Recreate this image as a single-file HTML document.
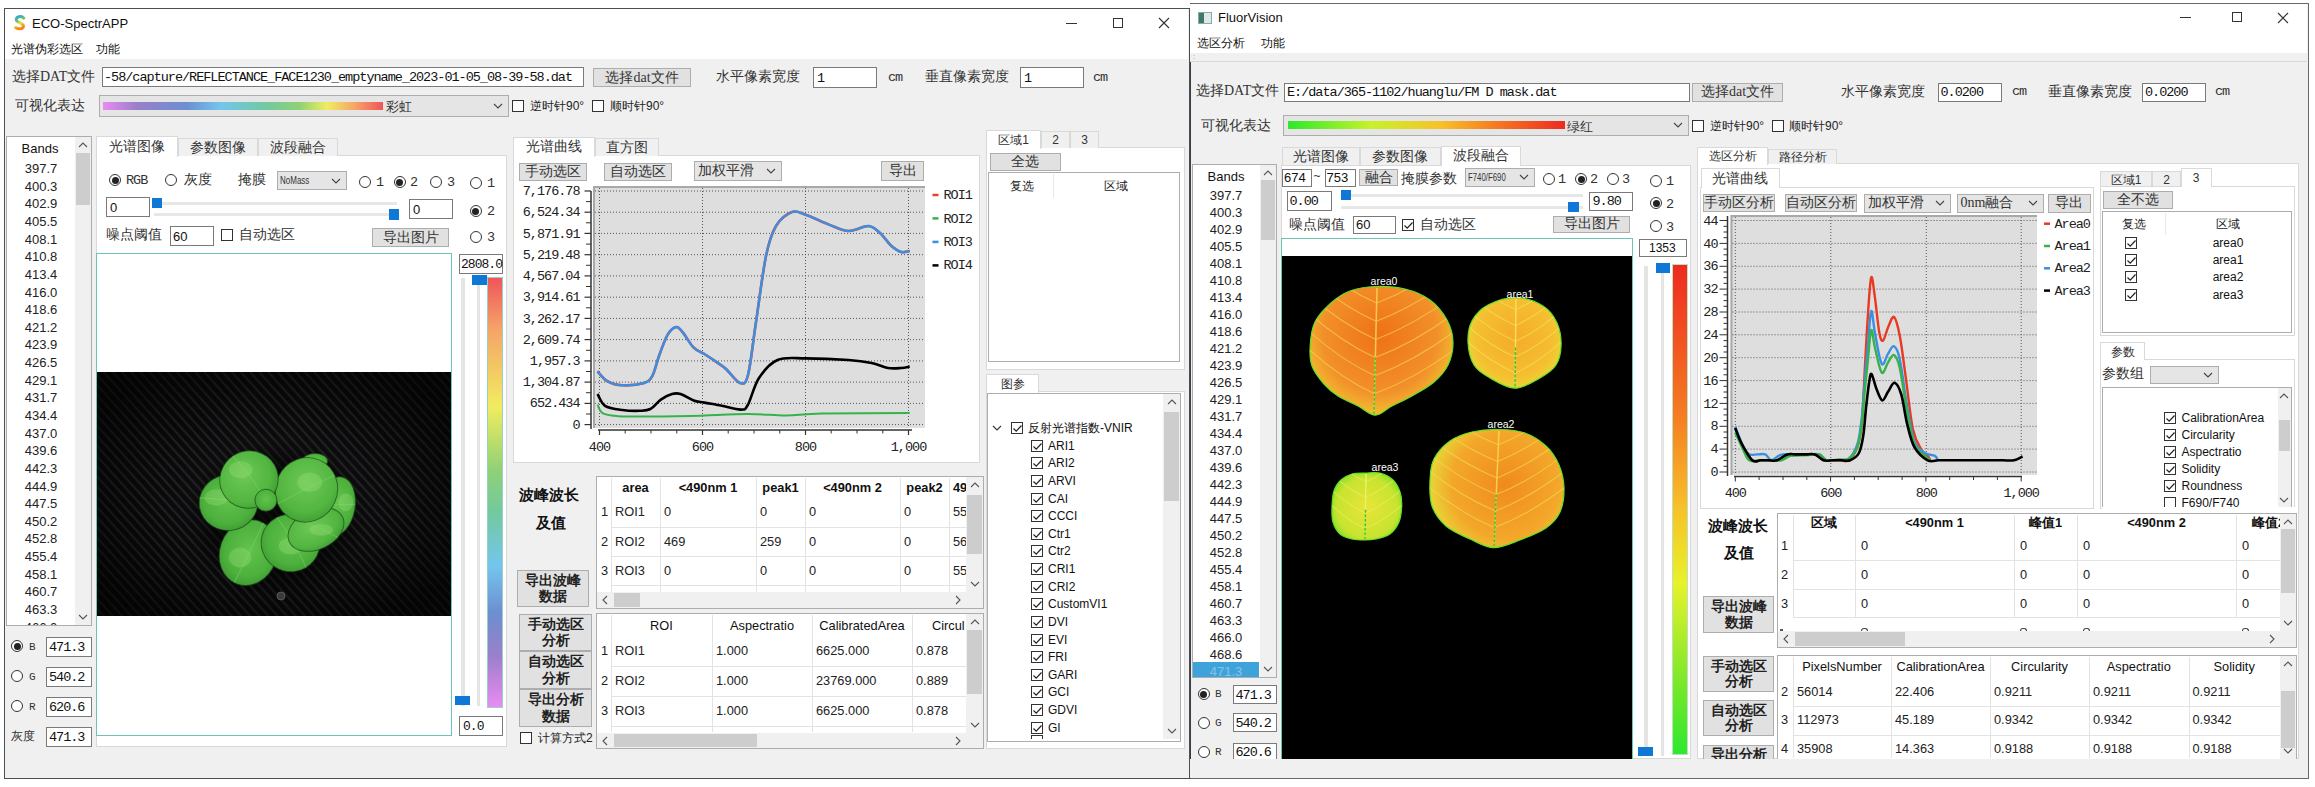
<!DOCTYPE html><html><head><meta charset="utf-8"><style>
html,body{margin:0;padding:0;}body{width:2315px;height:787px;position:relative;overflow:hidden;background:#fff;font-family:"Liberation Sans",sans-serif;}
body div,body svg{position:absolute;}.t{white-space:nowrap;}
</style></head><body>
<div style="left:4px;top:8px;width:1186px;height:771px;background:#f0f0f0;border:1px solid #4a4f55;box-sizing:border-box;"></div>
<div style="left:5px;top:9px;width:1183px;height:50px;background:#fff;"></div>
<svg style="left:13px;top:15px;" width="14" height="16"><defs><linearGradient id="sg" x1="0" y1="0" x2="0.3" y2="1"><stop offset="0" stop-color="#2aa3dc"/><stop offset="0.4" stop-color="#6cc46a"/><stop offset="0.62" stop-color="#e8e432"/><stop offset="1" stop-color="#f2881e"/></linearGradient></defs><path d="M10.8 3.2 C9.5 1.6 6.8 1.3 4.8 2.2 C2.6 3.3 2.8 6 5.2 7.1 C7.8 8.2 10.6 8.8 10.4 11.3 C10.1 14.2 5.6 14.6 2.6 12.6" stroke="url(#sg)" stroke-width="3" fill="none" stroke-linecap="round"/></svg>
<div class="t" style="left:32px;top:14.5px;font-size:13px;line-height:17px;font-family:'Liberation Sans', sans-serif;color:#111;">ECO-SpectrAPP</div>
<div style="left:1066px;top:23px;width:11px;height:1px;background:#333;"></div>
<div style="left:1113px;top:18px;width:10px;height:10px;border:1px solid #333;box-sizing:border-box;"></div>
<svg style="left:1158px;top:17px;" width="12" height="12"><path d="M1 1 L11 11 M11 1 L1 11" stroke="#333" stroke-width="1.1"/></svg>
<div class="t" style="left:11px;top:41.0px;font-size:12px;line-height:16px;font-family:'Liberation Sans', sans-serif;color:#111;">光谱伪彩选区</div>
<div class="t" style="left:96px;top:41.0px;font-size:12px;line-height:16px;font-family:'Liberation Sans', sans-serif;color:#111;">功能</div>
<div class="t" style="left:12px;top:68.0px;font-size:14px;line-height:18px;font-family:'Liberation Serif', serif;color:#333;">选择DAT文件</div>
<div style="left:102px;top:67px;width:482px;height:20px;background:#fff;border:1px solid #7a7a7a;box-sizing:border-box;"></div>
<div class="t" style="left:104px;top:69.0px;font-size:13.5px;line-height:17.5px;font-family:'Liberation Mono', monospace;letter-spacing:-1.01px;color:#111;">-58/capture/REFLECTANCE_FACE1230_emptyname_2023-01-05_08-39-58.dat</div>
<div style="left:593px;top:68px;width:98px;height:19px;background:#e1e1e1;border:1px solid #adadad;box-sizing:border-box;"></div>
<div class="t" style="left:583.0px;top:68.5px;width:118px;text-align:center;font-size:14px;line-height:18px;font-family:'Liberation Serif', serif;color:#333;">选择dat文件</div>
<div class="t" style="left:716px;top:68.0px;font-size:14px;line-height:18px;font-family:'Liberation Serif', serif;color:#333;">水平像素宽度</div>
<div style="left:813px;top:67px;width:64px;height:21px;background:#fff;border:1px solid #7a7a7a;box-sizing:border-box;"></div>
<div class="t" style="left:817px;top:69.5px;font-size:13.5px;line-height:17.5px;font-family:'Liberation Mono', monospace;letter-spacing:-1.01px;color:#111;">1</div>
<div class="t" style="left:888px;top:69.0px;font-size:13.5px;line-height:17.5px;font-family:'Liberation Mono', monospace;letter-spacing:-1.01px;color:#333;">cm</div>
<div class="t" style="left:925px;top:68.0px;font-size:14px;line-height:18px;font-family:'Liberation Serif', serif;color:#333;">垂直像素宽度</div>
<div style="left:1020px;top:67px;width:64px;height:21px;background:#fff;border:1px solid #7a7a7a;box-sizing:border-box;"></div>
<div class="t" style="left:1024px;top:69.5px;font-size:13.5px;line-height:17.5px;font-family:'Liberation Mono', monospace;letter-spacing:-1.01px;color:#111;">1</div>
<div class="t" style="left:1093px;top:69.0px;font-size:13.5px;line-height:17.5px;font-family:'Liberation Mono', monospace;letter-spacing:-1.01px;color:#333;">cm</div>
<div class="t" style="left:15px;top:97.0px;font-size:14px;line-height:18px;font-family:'Liberation Serif', serif;color:#333;">可视化表达</div>
<div style="left:99px;top:95px;width:410px;height:22px;background:#e5e5e5;border:1px solid #adadad;box-sizing:border-box;"></div>
<svg style="left:492px;top:100.0px;" width="12" height="12"><path transform="translate(6,6)" d="M-4 -2.0 L0 2.0 L4 -2.0" stroke="#444" stroke-width="1.1" fill="none"/></svg>
<div style="left:103px;top:101.5px;width:280px;height:8px;background:linear-gradient(90deg,#e98bf2 0%,#9a80c8 12%,#6c8fd0 30%,#74c6ec 42%,#72c9a0 58%,#8ed176 70%,#f1ec60 80%,#f5a468 90%,#f0555a 100%);"></div>
<div class="t" style="left:386px;top:97.5px;font-size:13px;line-height:17px;font-family:'Liberation Sans', sans-serif;color:#333;">彩虹</div>
<div style="left:512px;top:100px;width:12px;height:12px;border:1px solid #333;box-sizing:border-box;background:#fff;"></div>
<div class="t" style="left:530px;top:98.0px;font-size:12px;line-height:16px;font-family:'Liberation Sans', sans-serif;color:#222;">逆时针90°</div>
<div style="left:592px;top:100px;width:12px;height:12px;border:1px solid #333;box-sizing:border-box;background:#fff;"></div>
<div class="t" style="left:610px;top:98.0px;font-size:12px;line-height:16px;font-family:'Liberation Sans', sans-serif;color:#222;">顺时针90°</div>
<div style="left:6px;top:136px;width:86px;height:490px;background:#fff;border:1px solid #adadad;box-sizing:border-box;"></div>
<div style="left:75px;top:137px;width:16px;height:488px;background:#f0f0f0;"></div>
<div style="left:76px;top:153px;width:14px;height:52px;background:#cdcdcd;"></div>
<svg style="left:77.0px;top:139px;" width="12" height="12"><path transform="translate(6,6)" d="M-4 2.0 L0 -2.0 L4 2.0" stroke="#555" stroke-width="1.1" fill="none"/></svg>
<svg style="left:77.0px;top:611px;" width="12" height="12"><path transform="translate(6,6)" d="M-4 -2.0 L0 2.0 L4 -2.0" stroke="#555" stroke-width="1.1" fill="none"/></svg>
<div class="t" style="left:10.0px;top:139.5px;width:60px;text-align:center;font-size:13px;line-height:17px;font-family:'Liberation Sans', sans-serif;color:#111;">Bands</div>
<div style="left:7px;top:137px;width:68px;height:488px;overflow:hidden;">
<div class="t" style="left:0;top:23.0px;width:68px;text-align:center;font-size:13px;line-height:17px;color:#222;font-family:'Liberation Sans', sans-serif;">397.7</div>
<div class="t" style="left:0;top:40.6px;width:68px;text-align:center;font-size:13px;line-height:17px;color:#222;font-family:'Liberation Sans', sans-serif;">400.3</div>
<div class="t" style="left:0;top:58.3px;width:68px;text-align:center;font-size:13px;line-height:17px;color:#222;font-family:'Liberation Sans', sans-serif;">402.9</div>
<div class="t" style="left:0;top:75.9px;width:68px;text-align:center;font-size:13px;line-height:17px;color:#222;font-family:'Liberation Sans', sans-serif;">405.5</div>
<div class="t" style="left:0;top:93.6px;width:68px;text-align:center;font-size:13px;line-height:17px;color:#222;font-family:'Liberation Sans', sans-serif;">408.1</div>
<div class="t" style="left:0;top:111.2px;width:68px;text-align:center;font-size:13px;line-height:17px;color:#222;font-family:'Liberation Sans', sans-serif;">410.8</div>
<div class="t" style="left:0;top:128.8px;width:68px;text-align:center;font-size:13px;line-height:17px;color:#222;font-family:'Liberation Sans', sans-serif;">413.4</div>
<div class="t" style="left:0;top:146.5px;width:68px;text-align:center;font-size:13px;line-height:17px;color:#222;font-family:'Liberation Sans', sans-serif;">416.0</div>
<div class="t" style="left:0;top:164.1px;width:68px;text-align:center;font-size:13px;line-height:17px;color:#222;font-family:'Liberation Sans', sans-serif;">418.6</div>
<div class="t" style="left:0;top:181.8px;width:68px;text-align:center;font-size:13px;line-height:17px;color:#222;font-family:'Liberation Sans', sans-serif;">421.2</div>
<div class="t" style="left:0;top:199.4px;width:68px;text-align:center;font-size:13px;line-height:17px;color:#222;font-family:'Liberation Sans', sans-serif;">423.9</div>
<div class="t" style="left:0;top:217.0px;width:68px;text-align:center;font-size:13px;line-height:17px;color:#222;font-family:'Liberation Sans', sans-serif;">426.5</div>
<div class="t" style="left:0;top:234.7px;width:68px;text-align:center;font-size:13px;line-height:17px;color:#222;font-family:'Liberation Sans', sans-serif;">429.1</div>
<div class="t" style="left:0;top:252.3px;width:68px;text-align:center;font-size:13px;line-height:17px;color:#222;font-family:'Liberation Sans', sans-serif;">431.7</div>
<div class="t" style="left:0;top:270.0px;width:68px;text-align:center;font-size:13px;line-height:17px;color:#222;font-family:'Liberation Sans', sans-serif;">434.4</div>
<div class="t" style="left:0;top:287.6px;width:68px;text-align:center;font-size:13px;line-height:17px;color:#222;font-family:'Liberation Sans', sans-serif;">437.0</div>
<div class="t" style="left:0;top:305.2px;width:68px;text-align:center;font-size:13px;line-height:17px;color:#222;font-family:'Liberation Sans', sans-serif;">439.6</div>
<div class="t" style="left:0;top:322.9px;width:68px;text-align:center;font-size:13px;line-height:17px;color:#222;font-family:'Liberation Sans', sans-serif;">442.3</div>
<div class="t" style="left:0;top:340.5px;width:68px;text-align:center;font-size:13px;line-height:17px;color:#222;font-family:'Liberation Sans', sans-serif;">444.9</div>
<div class="t" style="left:0;top:358.2px;width:68px;text-align:center;font-size:13px;line-height:17px;color:#222;font-family:'Liberation Sans', sans-serif;">447.5</div>
<div class="t" style="left:0;top:375.8px;width:68px;text-align:center;font-size:13px;line-height:17px;color:#222;font-family:'Liberation Sans', sans-serif;">450.2</div>
<div class="t" style="left:0;top:393.4px;width:68px;text-align:center;font-size:13px;line-height:17px;color:#222;font-family:'Liberation Sans', sans-serif;">452.8</div>
<div class="t" style="left:0;top:411.1px;width:68px;text-align:center;font-size:13px;line-height:17px;color:#222;font-family:'Liberation Sans', sans-serif;">455.4</div>
<div class="t" style="left:0;top:428.7px;width:68px;text-align:center;font-size:13px;line-height:17px;color:#222;font-family:'Liberation Sans', sans-serif;">458.1</div>
<div class="t" style="left:0;top:446.4px;width:68px;text-align:center;font-size:13px;line-height:17px;color:#222;font-family:'Liberation Sans', sans-serif;">460.7</div>
<div class="t" style="left:0;top:464.0px;width:68px;text-align:center;font-size:13px;line-height:17px;color:#222;font-family:'Liberation Sans', sans-serif;">463.3</div>
<div class="t" style="left:0;top:481.6px;width:68px;text-align:center;font-size:13px;line-height:17px;color:#222;font-family:'Liberation Sans', sans-serif;">466.0</div>
</div>
<div style="left:11px;top:640px;width:12px;height:12px;border:1px solid #333;border-radius:50%;box-sizing:border-box;background:#fff;"></div>
<div style="left:13.5px;top:642.5px;width:7px;height:7px;background:#222;border-radius:50%;"></div>
<div class="t" style="left:29px;top:640.3px;font-size:11px;line-height:15px;font-family:'Liberation Mono', monospace;letter-spacing:-0.82px;color:#333;">B</div>
<div style="left:46px;top:637px;width:46px;height:20px;background:#fff;border:1px solid #7a7a7a;box-sizing:border-box;"></div>
<div class="t" style="left:49px;top:639.0px;font-size:13.5px;line-height:17.5px;font-family:'Liberation Mono', monospace;letter-spacing:-1.01px;color:#111;">471.3</div>
<div style="left:11px;top:670px;width:12px;height:12px;border:1px solid #333;border-radius:50%;box-sizing:border-box;background:#fff;"></div>
<div class="t" style="left:29px;top:670.3px;font-size:11px;line-height:15px;font-family:'Liberation Mono', monospace;letter-spacing:-0.82px;color:#333;">G</div>
<div style="left:46px;top:667px;width:46px;height:20px;background:#fff;border:1px solid #7a7a7a;box-sizing:border-box;"></div>
<div class="t" style="left:49px;top:669.0px;font-size:13.5px;line-height:17.5px;font-family:'Liberation Mono', monospace;letter-spacing:-1.01px;color:#111;">540.2</div>
<div style="left:11px;top:700px;width:12px;height:12px;border:1px solid #333;border-radius:50%;box-sizing:border-box;background:#fff;"></div>
<div class="t" style="left:29px;top:700.3px;font-size:11px;line-height:15px;font-family:'Liberation Mono', monospace;letter-spacing:-0.82px;color:#333;">R</div>
<div style="left:46px;top:697px;width:46px;height:20px;background:#fff;border:1px solid #7a7a7a;box-sizing:border-box;"></div>
<div class="t" style="left:49px;top:699.0px;font-size:13.5px;line-height:17.5px;font-family:'Liberation Mono', monospace;letter-spacing:-1.01px;color:#111;">620.6</div>
<div class="t" style="left:11px;top:728.0px;font-size:12px;line-height:16px;font-family:'Liberation Sans', sans-serif;color:#333;">灰度</div>
<div style="left:46px;top:727px;width:46px;height:20px;background:#fff;border:1px solid #7a7a7a;box-sizing:border-box;"></div>
<div class="t" style="left:49px;top:729.0px;font-size:13.5px;line-height:17.5px;font-family:'Liberation Mono', monospace;letter-spacing:-1.01px;color:#111;">471.3</div>
<div style="left:96px;top:155px;width:411px;height:592px;background:#fff;border:1px solid #d9d9d9;box-sizing:border-box;"></div>
<div style="left:96px;top:135.5px;width:81.5px;height:21.5px;background:#fff;border:1px solid #d9d9d9;border-bottom:none;box-sizing:border-box;z-index:2;"></div>
<div class="t" style="left:86.0px;top:137.8px;width:101.5px;text-align:center;font-size:14px;line-height:18px;font-family:'Liberation Serif', serif;color:#333;z-index:3;">光谱图像</div>
<div style="left:177.5px;top:137.5px;width:80px;height:18.5px;background:#f0f0f0;border:1px solid #d9d9d9;border-bottom:none;box-sizing:border-box;"></div>
<div class="t" style="left:167.5px;top:138.8px;width:100px;text-align:center;font-size:14px;line-height:18px;font-family:'Liberation Serif', serif;color:#333;z-index:3;">参数图像</div>
<div style="left:257.5px;top:137.5px;width:80px;height:18.5px;background:#f0f0f0;border:1px solid #d9d9d9;border-bottom:none;box-sizing:border-box;"></div>
<div class="t" style="left:247.5px;top:138.8px;width:100px;text-align:center;font-size:14px;line-height:18px;font-family:'Liberation Serif', serif;color:#333;z-index:3;">波段融合</div>
<div style="left:109px;top:174px;width:12px;height:12px;border:1px solid #333;border-radius:50%;box-sizing:border-box;background:#fff;"></div>
<div style="left:111.5px;top:176.5px;width:7px;height:7px;background:#222;border-radius:50%;"></div>
<div class="t" style="left:126px;top:172.1px;font-size:13.5px;line-height:17.5px;font-family:'Liberation Mono', monospace;letter-spacing:-1.01px;color:#333;">RGB</div>
<div style="left:165px;top:174px;width:12px;height:12px;border:1px solid #333;border-radius:50%;box-sizing:border-box;background:#fff;"></div>
<div class="t" style="left:184px;top:171.0px;font-size:14px;line-height:18px;font-family:'Liberation Serif', serif;color:#333;">灰度</div>
<div class="t" style="left:238px;top:171.0px;font-size:14px;line-height:18px;font-family:'Liberation Serif', serif;color:#333;">掩膜</div>
<div style="left:277px;top:171px;width:70px;height:19px;background:#e5e5e5;border:1px solid #adadad;box-sizing:border-box;"></div>
<svg style="left:330px;top:174.5px;" width="12" height="12"><path transform="translate(6,6)" d="M-4 -2.0 L0 2.0 L4 -2.0" stroke="#444" stroke-width="1.1" fill="none"/></svg>
<div class="t" style="left:280px;top:174.0px;font-size:10px;line-height:14px;font-family:'Liberation Sans', sans-serif;color:#333;transform:scaleX(0.8);transform-origin:left;">NoMass</div>
<div style="left:359px;top:176px;width:12px;height:12px;border:1px solid #333;border-radius:50%;box-sizing:border-box;background:#fff;"></div>
<div class="t" style="left:376px;top:174.1px;font-size:13.5px;line-height:17.5px;font-family:'Liberation Mono', monospace;letter-spacing:-1.01px;color:#333;">1</div>
<div style="left:393.5px;top:176px;width:12px;height:12px;border:1px solid #333;border-radius:50%;box-sizing:border-box;background:#fff;"></div>
<div style="left:396.0px;top:178.5px;width:7px;height:7px;background:#222;border-radius:50%;"></div>
<div class="t" style="left:410px;top:174.1px;font-size:13.5px;line-height:17.5px;font-family:'Liberation Mono', monospace;letter-spacing:-1.01px;color:#333;">2</div>
<div style="left:429.5px;top:176px;width:12px;height:12px;border:1px solid #333;border-radius:50%;box-sizing:border-box;background:#fff;"></div>
<div class="t" style="left:447px;top:174.1px;font-size:13.5px;line-height:17.5px;font-family:'Liberation Mono', monospace;letter-spacing:-1.01px;color:#333;">3</div>
<div style="left:469.5px;top:177px;width:12px;height:12px;border:1px solid #333;border-radius:50%;box-sizing:border-box;background:#fff;"></div>
<div class="t" style="left:487px;top:175.1px;font-size:13.5px;line-height:17.5px;font-family:'Liberation Mono', monospace;letter-spacing:-1.01px;color:#333;">1</div>
<div style="left:469.5px;top:205px;width:12px;height:12px;border:1px solid #333;border-radius:50%;box-sizing:border-box;background:#fff;"></div>
<div style="left:472.0px;top:207.5px;width:7px;height:7px;background:#222;border-radius:50%;"></div>
<div class="t" style="left:487px;top:203.1px;font-size:13.5px;line-height:17.5px;font-family:'Liberation Mono', monospace;letter-spacing:-1.01px;color:#333;">2</div>
<div style="left:469.5px;top:231px;width:12px;height:12px;border:1px solid #333;border-radius:50%;box-sizing:border-box;background:#fff;"></div>
<div class="t" style="left:487px;top:229.1px;font-size:13.5px;line-height:17.5px;font-family:'Liberation Mono', monospace;letter-spacing:-1.01px;color:#333;">3</div>
<div style="left:106px;top:197px;width:44px;height:20px;background:#fff;border:1px solid #7a7a7a;box-sizing:border-box;"></div>
<div class="t" style="left:110px;top:198.5px;font-size:13px;line-height:17px;font-family:'Liberation Sans', sans-serif;color:#111;">0</div>
<div style="left:154px;top:201.5px;width:243px;height:3px;background:#e7e7e7;"></div>
<div style="left:154px;top:213px;width:243px;height:3px;background:#e7e7e7;"></div>
<div style="left:152px;top:198px;width:10px;height:10px;background:#0f78d7;"></div>
<div style="left:389px;top:209px;width:10px;height:11px;background:#0f78d7;"></div>
<div style="left:409px;top:199px;width:44px;height:20px;background:#fff;border:1px solid #7a7a7a;box-sizing:border-box;"></div>
<div class="t" style="left:413px;top:200.5px;font-size:13px;line-height:17px;font-family:'Liberation Sans', sans-serif;color:#111;">0</div>
<div class="t" style="left:106px;top:226.0px;font-size:14px;line-height:18px;font-family:'Liberation Serif', serif;color:#333;">噪点阈值</div>
<div style="left:170px;top:226px;width:44px;height:20px;background:#fff;border:1px solid #7a7a7a;box-sizing:border-box;"></div>
<div class="t" style="left:173px;top:227.5px;font-size:13px;line-height:17px;font-family:'Liberation Sans', sans-serif;color:#111;">60</div>
<div style="left:221px;top:229px;width:12px;height:12px;border:1px solid #333;box-sizing:border-box;background:#fff;"></div>
<div class="t" style="left:239px;top:226.0px;font-size:14px;line-height:18px;font-family:'Liberation Serif', serif;color:#333;">自动选区</div>
<div style="left:372px;top:228px;width:77px;height:19px;background:#e1e1e1;border:1px solid #adadad;box-sizing:border-box;"></div>
<div class="t" style="left:362.0px;top:228.5px;width:97px;text-align:center;font-size:14px;line-height:18px;font-family:'Liberation Serif', serif;color:#333;">导出图片</div>
<div style="left:96px;top:253px;width:356px;height:483px;background:#fff;border:1px solid #6cc4b4;box-sizing:border-box;"></div>
<div style="left:97px;top:372px;width:354px;height:244px;background:repeating-linear-gradient(48deg,#0a0a0b 0px,#0a0a0b 3.2px,#262428 5px,#0a0a0b 6.8px);"></div>
<div style="left:97px;top:372px;width:354px;height:244px;background:radial-gradient(ellipse 60% 60% at 50% 50%, rgba(40,40,42,0.25) 0%, rgba(0,0,0,0) 50%, rgba(0,0,0,0.6) 100%);"></div>
<svg style="left:97px;top:372px;" width="354" height="244" viewBox="97 372 354 244"><defs><radialGradient id="lg" cx="0.5" cy="0.45" r="0.6"><stop offset="0" stop-color="#62c34c"/><stop offset="0.7" stop-color="#4cb03c"/><stop offset="1" stop-color="#3c9832"/></radialGradient><radialGradient id="lg2" cx="0.45" cy="0.4" r="0.65"><stop offset="0" stop-color="#6cc854"/><stop offset="0.7" stop-color="#52b640"/><stop offset="1" stop-color="#3e9c34"/></radialGradient><radialGradient id="sh" cx="0.5" cy="0.5" r="0.5"><stop offset="0.6" stop-color="#000" stop-opacity="0.6"/><stop offset="1" stop-color="#000" stop-opacity="0"/></radialGradient></defs><ellipse cx="277" cy="520" rx="90" ry="80" fill="url(#sh)"/><ellipse cx="315" cy="461" rx="12.7" ry="7.5" transform="rotate(0 315 461)" fill="url(#lg)" stroke="#1c4a1a" stroke-width="1" stroke-opacity="0.7"/><ellipse cx="336.5" cy="506.5" rx="18.5" ry="30" transform="rotate(10 336.5 506.5)" fill="url(#lg)" stroke="#1c4a1a" stroke-width="1" stroke-opacity="0.7"/><clipPath id="pl1"><ellipse cx="336.5" cy="506.5" rx="18.5" ry="30" transform="rotate(10 336.5 506.5)"/></clipPath><g clip-path="url(#pl1)"><path d="M396.4 505.1 Q347.1 502.4 270.0 508.0" stroke="#7ccf62" stroke-width="1.1" fill="none" opacity="0.55"/><ellipse cx="345.8" cy="502.2" rx="7.4" ry="9.0" fill="#a2e482" opacity="0.3"/></g><ellipse cx="248.4" cy="552.6" rx="28.6" ry="33.4" transform="rotate(20 248.4 552.6)" fill="url(#lg)" stroke="#1c4a1a" stroke-width="1" stroke-opacity="0.7"/><clipPath id="pl2"><ellipse cx="248.4" cy="552.6" rx="28.6" ry="33.4" transform="rotate(20 248.4 552.6)"/></clipPath><g clip-path="url(#pl2)"><path d="M229.0 592.7 Q250.2 553.1 270.0 508.0" stroke="#7ccf62" stroke-width="1.1" fill="none" opacity="0.55"/><ellipse cx="240.1" cy="557.5" rx="11.4" ry="10.0" fill="#a2e482" opacity="0.3"/></g><ellipse cx="228.6" cy="502.6" rx="29.4" ry="27.8" transform="rotate(-10 228.6 502.6)" fill="url(#lg)" stroke="#1c4a1a" stroke-width="1" stroke-opacity="0.7"/><clipPath id="pl3"><ellipse cx="228.6" cy="502.6" rx="29.4" ry="27.8" transform="rotate(-10 228.6 502.6)"/></clipPath><g clip-path="url(#pl3)"><path d="M191.3 497.7 Q228.5 498.1 270.0 508.0" stroke="#7ccf62" stroke-width="1.1" fill="none" opacity="0.55"/><ellipse cx="216.3" cy="497.5" rx="11.8" ry="8.3" fill="#a2e482" opacity="0.3"/></g><ellipse cx="290.5" cy="543" rx="29.4" ry="28.6" transform="rotate(15 290.5 543)" fill="url(#lg)" stroke="#1c4a1a" stroke-width="1" stroke-opacity="0.7"/><clipPath id="pl4"><ellipse cx="290.5" cy="543" rx="29.4" ry="28.6" transform="rotate(15 290.5 543)"/></clipPath><g clip-path="url(#pl4)"><path d="M308.9 574.5 Q296.6 542.5 270.0 508.0" stroke="#7ccf62" stroke-width="1.1" fill="none" opacity="0.55"/><ellipse cx="290.6" cy="546.0" rx="11.8" ry="8.6" fill="#a2e482" opacity="0.3"/></g><ellipse cx="316" cy="529.5" rx="29.4" ry="19.8" transform="rotate(-25 316 529.5)" fill="url(#lg2)" stroke="#1c4a1a" stroke-width="1" stroke-opacity="0.7"/><clipPath id="pl5"><ellipse cx="316" cy="529.5" rx="29.4" ry="19.8" transform="rotate(-25 316 529.5)"/></clipPath><g clip-path="url(#pl5)"><path d="M357.4 548.9 Q324.6 527.6 270.0 508.0" stroke="#7ccf62" stroke-width="1.1" fill="none" opacity="0.55"/><ellipse cx="321.2" cy="529.8" rx="11.8" ry="5.9" fill="#a2e482" opacity="0.3"/></g><ellipse cx="306.4" cy="489.8" rx="31" ry="32.5" transform="rotate(25 306.4 489.8)" fill="url(#lg2)" stroke="#1c4a1a" stroke-width="1" stroke-opacity="0.7"/><clipPath id="pl6"><ellipse cx="306.4" cy="489.8" rx="31" ry="32.5" transform="rotate(25 306.4 489.8)"/></clipPath><g clip-path="url(#pl6)"><path d="M339.2 473.4 Q314.0 484.0 270.0 508.0" stroke="#7ccf62" stroke-width="1.1" fill="none" opacity="0.55"/><ellipse cx="309.7" cy="482.2" rx="12.4" ry="9.8" fill="#a2e482" opacity="0.3"/></g><ellipse cx="249" cy="479.5" rx="29.4" ry="28.5" transform="rotate(-30 249 479.5)" fill="url(#lg2)" stroke="#1c4a1a" stroke-width="1" stroke-opacity="0.7"/><clipPath id="pl7"><ellipse cx="249" cy="479.5" rx="29.4" ry="28.5" transform="rotate(-30 249 479.5)"/></clipPath><g clip-path="url(#pl7)"><path d="M230.1 453.9 Q250.9 472.6 270.0 508.0" stroke="#7ccf62" stroke-width="1.1" fill="none" opacity="0.55"/><ellipse cx="240.8" cy="469.8" rx="11.8" ry="8.5" fill="#a2e482" opacity="0.3"/></g><ellipse cx="265.9" cy="500.2" rx="11" ry="11" transform="rotate(0 265.9 500.2)" fill="url(#lg)" stroke="#1c4a1a" stroke-width="1" stroke-opacity="0.7"/><circle cx="281" cy="596" r="4" fill="#3a3a3a" stroke="#777" stroke-width="0.6"/></svg>
<div style="left:459px;top:254px;width:44px;height:20px;background:#fff;border:1px solid #7a7a7a;box-sizing:border-box;"></div>
<div class="t" style="left:461px;top:256.3px;font-size:13px;line-height:17px;font-family:'Liberation Mono', monospace;letter-spacing:-0.97px;color:#111;">2808.0</div>
<div style="left:461px;top:278px;width:4px;height:428px;background:#e4e4e4;"></div>
<div style="left:477px;top:278px;width:3px;height:428px;background:#e4e4e4;"></div>
<div style="left:471.5px;top:275px;width:15px;height:10px;background:#0f78d7;"></div>
<div style="left:455px;top:696px;width:15px;height:9px;background:#0f78d7;"></div>
<div style="left:487px;top:277px;width:16px;height:431px;border:1px solid #9ad0c8;box-sizing:border-box;background:linear-gradient(180deg,#f0555a 0%,#f5a468 12%,#f1ec60 30%,#8ed176 45%,#72c9a0 55%,#74c6ec 67%,#6c8fd0 78%,#9a80c8 88%,#e98bf2 100%);"></div>
<div style="left:459px;top:716px;width:44px;height:20px;background:#fff;border:1px solid #7a7a7a;box-sizing:border-box;"></div>
<div class="t" style="left:463px;top:718.3px;font-size:13px;line-height:17px;font-family:'Liberation Mono', monospace;letter-spacing:-0.97px;color:#111;">0.0</div>
<div style="left:513px;top:155px;width:467px;height:308px;background:#fff;border:1px solid #d9d9d9;box-sizing:border-box;"></div>
<div style="left:513px;top:136.5px;width:82px;height:20.5px;background:#fff;border:1px solid #d9d9d9;border-bottom:none;box-sizing:border-box;z-index:2;"></div>
<div class="t" style="left:503.0px;top:138.2px;width:102px;text-align:center;font-size:14px;line-height:18px;font-family:'Liberation Serif', serif;color:#333;z-index:3;">光谱曲线</div>
<div style="left:595px;top:137.5px;width:64px;height:18.5px;background:#f0f0f0;border:1px solid #d9d9d9;border-bottom:none;box-sizing:border-box;"></div>
<div class="t" style="left:585.0px;top:138.8px;width:84px;text-align:center;font-size:14px;line-height:18px;font-family:'Liberation Serif', serif;color:#333;z-index:3;">直方图</div>
<div style="left:519px;top:163px;width:68px;height:18px;background:#e1e1e1;border:1px solid #adadad;box-sizing:border-box;"></div>
<div class="t" style="left:509.0px;top:163.0px;width:88px;text-align:center;font-size:14px;line-height:18px;font-family:'Liberation Serif', serif;color:#333;">手动选区</div>
<div style="left:604px;top:163px;width:68px;height:18px;background:#e1e1e1;border:1px solid #adadad;box-sizing:border-box;"></div>
<div class="t" style="left:594.0px;top:163.0px;width:88px;text-align:center;font-size:14px;line-height:18px;font-family:'Liberation Serif', serif;color:#333;">自动选区</div>
<div style="left:694px;top:161px;width:88px;height:20px;background:#e5e5e5;border:1px solid #adadad;box-sizing:border-box;"></div>
<div class="t" style="left:698px;top:162.0px;font-size:14px;line-height:18px;font-family:'Liberation Serif', serif;color:#333;">加权平滑</div>
<svg style="left:765px;top:165.0px;" width="12" height="12"><path transform="translate(6,6)" d="M-4 -2.0 L0 2.0 L4 -2.0" stroke="#444" stroke-width="1.1" fill="none"/></svg>
<div style="left:881px;top:161px;width:43px;height:20px;background:#e1e1e1;border:1px solid #adadad;box-sizing:border-box;"></div>
<div class="t" style="left:871.0px;top:162.0px;width:63px;text-align:center;font-size:14px;line-height:18px;font-family:'Liberation Serif', serif;color:#333;">导出</div>
<svg style="left:513px;top:156px;" width="467" height="306" viewBox="513 156 467 306"><rect x="593" y="186" width="332" height="242" fill="#dedede"/><path d="M594 428 L594 187 L925 187" stroke="#a8a8a8" stroke-width="2" fill="none"/><line x1="595" y1="424.6" x2="925" y2="424.6" stroke="#555" stroke-width="1" stroke-dasharray="1 2"/><line x1="595" y1="403.4" x2="925" y2="403.4" stroke="#555" stroke-width="1" stroke-dasharray="1 2"/><line x1="595" y1="382.1" x2="925" y2="382.1" stroke="#555" stroke-width="1" stroke-dasharray="1 2"/><line x1="595" y1="360.9" x2="925" y2="360.9" stroke="#555" stroke-width="1" stroke-dasharray="1 2"/><line x1="595" y1="339.6" x2="925" y2="339.6" stroke="#555" stroke-width="1" stroke-dasharray="1 2"/><line x1="595" y1="318.4" x2="925" y2="318.4" stroke="#555" stroke-width="1" stroke-dasharray="1 2"/><line x1="595" y1="297.2" x2="925" y2="297.2" stroke="#555" stroke-width="1" stroke-dasharray="1 2"/><line x1="595" y1="275.9" x2="925" y2="275.9" stroke="#555" stroke-width="1" stroke-dasharray="1 2"/><line x1="595" y1="254.7" x2="925" y2="254.7" stroke="#555" stroke-width="1" stroke-dasharray="1 2"/><line x1="595" y1="233.4" x2="925" y2="233.4" stroke="#555" stroke-width="1" stroke-dasharray="1 2"/><line x1="595" y1="212.2" x2="925" y2="212.2" stroke="#555" stroke-width="1" stroke-dasharray="1 2"/><line x1="595" y1="191.0" x2="925" y2="191.0" stroke="#555" stroke-width="1" stroke-dasharray="1 2"/><line x1="599.5" y1="188" x2="599.5" y2="428" stroke="#555" stroke-width="1" stroke-dasharray="1 2"/><line x1="702.5" y1="188" x2="702.5" y2="428" stroke="#555" stroke-width="1" stroke-dasharray="1 2"/><line x1="805.5" y1="188" x2="805.5" y2="428" stroke="#555" stroke-width="1" stroke-dasharray="1 2"/><line x1="908.5" y1="188" x2="908.5" y2="428" stroke="#555" stroke-width="1" stroke-dasharray="1 2"/><line x1="591" y1="191" x2="591" y2="429" stroke="#333" stroke-width="1.5"/><line x1="584.5" y1="424.6" x2="591" y2="424.6" stroke="#333" stroke-width="1.2"/><line x1="586" y1="414.0" x2="591" y2="414.0" stroke="#333" stroke-width="1"/><line x1="584.5" y1="403.4" x2="591" y2="403.4" stroke="#333" stroke-width="1.2"/><line x1="586" y1="392.7" x2="591" y2="392.7" stroke="#333" stroke-width="1"/><line x1="584.5" y1="382.1" x2="591" y2="382.1" stroke="#333" stroke-width="1.2"/><line x1="586" y1="371.5" x2="591" y2="371.5" stroke="#333" stroke-width="1"/><line x1="584.5" y1="360.9" x2="591" y2="360.9" stroke="#333" stroke-width="1.2"/><line x1="586" y1="350.3" x2="591" y2="350.3" stroke="#333" stroke-width="1"/><line x1="584.5" y1="339.6" x2="591" y2="339.6" stroke="#333" stroke-width="1.2"/><line x1="586" y1="329.0" x2="591" y2="329.0" stroke="#333" stroke-width="1"/><line x1="584.5" y1="318.4" x2="591" y2="318.4" stroke="#333" stroke-width="1.2"/><line x1="586" y1="307.8" x2="591" y2="307.8" stroke="#333" stroke-width="1"/><line x1="584.5" y1="297.2" x2="591" y2="297.2" stroke="#333" stroke-width="1.2"/><line x1="586" y1="286.5" x2="591" y2="286.5" stroke="#333" stroke-width="1"/><line x1="584.5" y1="275.9" x2="591" y2="275.9" stroke="#333" stroke-width="1.2"/><line x1="586" y1="265.3" x2="591" y2="265.3" stroke="#333" stroke-width="1"/><line x1="584.5" y1="254.7" x2="591" y2="254.7" stroke="#333" stroke-width="1.2"/><line x1="586" y1="244.1" x2="591" y2="244.1" stroke="#333" stroke-width="1"/><line x1="584.5" y1="233.4" x2="591" y2="233.4" stroke="#333" stroke-width="1.2"/><line x1="586" y1="222.8" x2="591" y2="222.8" stroke="#333" stroke-width="1"/><line x1="584.5" y1="212.2" x2="591" y2="212.2" stroke="#333" stroke-width="1.2"/><line x1="586" y1="201.6" x2="591" y2="201.6" stroke="#333" stroke-width="1"/><line x1="584.5" y1="191.0" x2="591" y2="191.0" stroke="#333" stroke-width="1.2"/><line x1="598" y1="430" x2="912" y2="430" stroke="#333" stroke-width="1.5"/><line x1="599.5" y1="430" x2="599.5" y2="435" stroke="#333" stroke-width="1.2"/><line x1="625.2" y1="430" x2="625.2" y2="433.5" stroke="#333" stroke-width="1"/><line x1="651.0" y1="430" x2="651.0" y2="433.5" stroke="#333" stroke-width="1"/><line x1="676.8" y1="430" x2="676.8" y2="433.5" stroke="#333" stroke-width="1"/><line x1="702.5" y1="430" x2="702.5" y2="435" stroke="#333" stroke-width="1.2"/><line x1="728.2" y1="430" x2="728.2" y2="433.5" stroke="#333" stroke-width="1"/><line x1="754.0" y1="430" x2="754.0" y2="433.5" stroke="#333" stroke-width="1"/><line x1="779.8" y1="430" x2="779.8" y2="433.5" stroke="#333" stroke-width="1"/><line x1="805.5" y1="430" x2="805.5" y2="435" stroke="#333" stroke-width="1.2"/><line x1="831.2" y1="430" x2="831.2" y2="433.5" stroke="#333" stroke-width="1"/><line x1="857.0" y1="430" x2="857.0" y2="433.5" stroke="#333" stroke-width="1"/><line x1="882.8" y1="430" x2="882.8" y2="433.5" stroke="#333" stroke-width="1"/><line x1="908.5" y1="430" x2="908.5" y2="435" stroke="#333" stroke-width="1.2"/><path d="M597.5 404.8 C598.4 406.2 599.6 411.5 603.0 413.4 C606.4 415.3 612.7 415.7 618.0 416.2 C623.3 416.7 623.0 416.6 635.0 416.6 C647.0 416.6 671.2 416.4 690.0 416.0 C708.8 415.6 731.6 414.1 747.6 414.0 C763.6 413.9 773.6 415.6 786.0 415.5 C798.4 415.4 801.4 414.0 822.0 413.6 C842.6 413.2 895.1 413.1 909.7 413.0" stroke="#35b34a" stroke-width="2" fill="none" stroke-linejoin="round"/><path d="M597.5 394.0 C598.8 396.0 600.9 403.1 605.0 405.8 C609.1 408.5 616.5 409.2 622.3 410.0 C628.1 410.8 634.9 411.0 639.6 410.8 C644.3 410.6 646.8 410.9 650.4 409.0 C654.0 407.1 657.6 401.9 661.2 399.4 C664.8 396.9 668.8 394.9 672.0 394.0 C675.2 393.1 677.0 392.9 680.6 394.0 C684.2 395.1 689.6 399.0 693.6 400.4 C697.6 401.8 699.7 401.7 704.4 402.6 C709.1 403.5 715.6 404.6 721.7 405.8 C727.8 407.0 736.6 409.8 741.0 409.6 C745.4 409.4 745.0 409.9 748.0 404.6 C751.0 399.3 754.1 385.4 759.0 378.0 C763.9 370.6 769.7 363.3 777.5 360.0 C785.3 356.7 793.8 358.4 805.6 358.4 C817.5 358.4 837.6 359.2 848.6 360.0 C859.6 360.8 865.1 361.7 871.7 363.0 C878.3 364.3 883.0 367.2 888.0 368.0 C893.0 368.8 897.8 368.2 901.4 368.0 C905.0 367.8 908.3 366.8 909.7 366.6" stroke="#000" stroke-width="2.6" fill="none" stroke-linejoin="round"/><path d="M597.5 371.3 C599.1 372.9 602.9 378.7 607.0 381.0 C611.1 383.3 616.1 385.0 622.3 385.3 C628.5 385.6 639.0 384.6 644.0 383.0 C649.0 381.4 650.0 380.1 652.5 375.6 C655.0 371.1 656.5 362.8 659.0 356.0 C661.5 349.2 664.8 339.4 667.7 334.6 C670.6 329.8 673.8 327.4 676.3 327.0 C678.8 326.6 679.9 329.0 682.8 332.4 C685.7 335.8 690.0 343.9 693.6 347.5 C697.2 351.1 700.5 351.5 704.4 354.0 C708.3 356.5 713.7 360.1 717.3 362.6 C720.9 365.1 722.2 365.6 726.0 369.0 C729.8 372.4 736.3 382.0 740.0 383.0 C743.7 384.0 745.3 385.2 748.0 375.0 C750.7 364.8 753.0 341.8 756.0 322.0 C759.0 302.2 762.7 272.0 766.0 256.0 C769.3 240.0 771.7 233.3 776.0 226.0 C780.3 218.7 787.1 213.9 792.0 212.0 C796.9 210.1 799.4 212.6 805.6 214.7 C811.8 216.8 821.8 221.9 829.0 224.6 C836.2 227.3 842.0 230.8 848.6 231.0 C855.2 231.2 863.2 225.7 868.4 226.0 C873.6 226.3 876.1 229.7 880.0 233.0 C883.9 236.3 887.9 242.8 891.5 246.0 C895.1 249.2 898.4 251.2 901.4 252.0 C904.4 252.8 908.3 251.2 909.7 251.0" stroke="#e8402a" stroke-width="2.6" fill="none" stroke-linejoin="round"/><path d="M597.5 371.3 C599.1 372.9 602.9 378.7 607.0 381.0 C611.1 383.3 616.1 385.0 622.3 385.3 C628.5 385.6 639.0 384.6 644.0 383.0 C649.0 381.4 650.0 380.1 652.5 375.6 C655.0 371.1 656.5 362.8 659.0 356.0 C661.5 349.2 664.8 339.4 667.7 334.6 C670.6 329.8 673.8 327.4 676.3 327.0 C678.8 326.6 679.9 329.0 682.8 332.4 C685.7 335.8 690.0 343.9 693.6 347.5 C697.2 351.1 700.5 351.5 704.4 354.0 C708.3 356.5 713.7 360.1 717.3 362.6 C720.9 365.1 722.2 365.6 726.0 369.0 C729.8 372.4 736.3 382.0 740.0 383.0 C743.7 384.0 745.3 385.2 748.0 375.0 C750.7 364.8 753.0 341.8 756.0 322.0 C759.0 302.2 762.7 272.0 766.0 256.0 C769.3 240.0 771.7 233.3 776.0 226.0 C780.3 218.7 787.1 213.9 792.0 212.0 C796.9 210.1 799.4 212.6 805.6 214.7 C811.8 216.8 821.8 221.9 829.0 224.6 C836.2 227.3 842.0 230.8 848.6 231.0 C855.2 231.2 863.2 225.7 868.4 226.0 C873.6 226.3 876.1 229.7 880.0 233.0 C883.9 236.3 887.9 242.8 891.5 246.0 C895.1 249.2 898.4 251.2 901.4 252.0 C904.4 252.8 908.3 251.2 909.7 251.0" stroke="#3c8fe0" stroke-width="2.4" fill="none" stroke-linejoin="round"/><line x1="932.5" y1="195.0" x2="938.5" y2="195.0" stroke="#e8402a" stroke-width="2.5"/><line x1="932.5" y1="218.4" x2="938.5" y2="218.4" stroke="#35b34a" stroke-width="2.5"/><line x1="932.5" y1="241.9" x2="938.5" y2="241.9" stroke="#3c8fe0" stroke-width="2.5"/><line x1="932.5" y1="265.4" x2="938.5" y2="265.4" stroke="#000" stroke-width="2.5"/></svg>
<div class="t" style="left:943.5px;top:187.1px;font-size:13.5px;line-height:17.5px;font-family:'Liberation Mono', monospace;letter-spacing:-1.01px;color:#222;">ROI1</div>
<div class="t" style="left:943.5px;top:210.5px;font-size:13.5px;line-height:17.5px;font-family:'Liberation Mono', monospace;letter-spacing:-1.01px;color:#222;">ROI2</div>
<div class="t" style="left:943.5px;top:234.0px;font-size:13.5px;line-height:17.5px;font-family:'Liberation Mono', monospace;letter-spacing:-1.01px;color:#222;">ROI3</div>
<div class="t" style="left:943.5px;top:257.4px;font-size:13.5px;line-height:17.5px;font-family:'Liberation Mono', monospace;letter-spacing:-1.01px;color:#222;">ROI4</div>
<div class="t" style="left:479.5px;top:416.7px;width:100px;text-align:right;font-size:13.5px;line-height:17.5px;font-family:'Liberation Mono', monospace;letter-spacing:-1.01px;color:#222;">0</div>
<div class="t" style="left:479.5px;top:395.4px;width:100px;text-align:right;font-size:13.5px;line-height:17.5px;font-family:'Liberation Mono', monospace;letter-spacing:-1.01px;color:#222;">652.434</div>
<div class="t" style="left:479.5px;top:374.2px;width:100px;text-align:right;font-size:13.5px;line-height:17.5px;font-family:'Liberation Mono', monospace;letter-spacing:-1.01px;color:#222;">1,304.87</div>
<div class="t" style="left:479.5px;top:352.9px;width:100px;text-align:right;font-size:13.5px;line-height:17.5px;font-family:'Liberation Mono', monospace;letter-spacing:-1.01px;color:#222;">1,957.3</div>
<div class="t" style="left:479.5px;top:331.7px;width:100px;text-align:right;font-size:13.5px;line-height:17.5px;font-family:'Liberation Mono', monospace;letter-spacing:-1.01px;color:#222;">2,609.74</div>
<div class="t" style="left:479.5px;top:310.5px;width:100px;text-align:right;font-size:13.5px;line-height:17.5px;font-family:'Liberation Mono', monospace;letter-spacing:-1.01px;color:#222;">3,262.17</div>
<div class="t" style="left:479.5px;top:289.2px;width:100px;text-align:right;font-size:13.5px;line-height:17.5px;font-family:'Liberation Mono', monospace;letter-spacing:-1.01px;color:#222;">3,914.61</div>
<div class="t" style="left:479.5px;top:268.0px;width:100px;text-align:right;font-size:13.5px;line-height:17.5px;font-family:'Liberation Mono', monospace;letter-spacing:-1.01px;color:#222;">4,567.04</div>
<div class="t" style="left:479.5px;top:246.7px;width:100px;text-align:right;font-size:13.5px;line-height:17.5px;font-family:'Liberation Mono', monospace;letter-spacing:-1.01px;color:#222;">5,219.48</div>
<div class="t" style="left:479.5px;top:225.5px;width:100px;text-align:right;font-size:13.5px;line-height:17.5px;font-family:'Liberation Mono', monospace;letter-spacing:-1.01px;color:#222;">5,871.91</div>
<div class="t" style="left:479.5px;top:204.3px;width:100px;text-align:right;font-size:13.5px;line-height:17.5px;font-family:'Liberation Mono', monospace;letter-spacing:-1.01px;color:#222;">6,524.34</div>
<div class="t" style="left:479.5px;top:183.0px;width:100px;text-align:right;font-size:13.5px;line-height:17.5px;font-family:'Liberation Mono', monospace;letter-spacing:-1.01px;color:#222;">7,176.78</div>
<div class="t" style="left:569.5px;top:439.1px;width:60px;text-align:center;font-size:13.5px;line-height:17.5px;font-family:'Liberation Mono', monospace;letter-spacing:-1.01px;color:#222;">400</div>
<div class="t" style="left:672.5px;top:439.1px;width:60px;text-align:center;font-size:13.5px;line-height:17.5px;font-family:'Liberation Mono', monospace;letter-spacing:-1.01px;color:#222;">600</div>
<div class="t" style="left:775.5px;top:439.1px;width:60px;text-align:center;font-size:13.5px;line-height:17.5px;font-family:'Liberation Mono', monospace;letter-spacing:-1.01px;color:#222;">800</div>
<div class="t" style="left:878.5px;top:439.1px;width:60px;text-align:center;font-size:13.5px;line-height:17.5px;font-family:'Liberation Mono', monospace;letter-spacing:-1.01px;color:#222;">1,000</div>
<div class="t" style="left:519px;top:485.5px;font-size:15px;line-height:19px;font-family:'Liberation Serif', serif;color:#111;font-weight:bold;">波峰波长</div>
<div class="t" style="left:521.0px;top:513.5px;width:60px;text-align:center;font-size:15px;line-height:19px;font-family:'Liberation Serif', serif;color:#111;font-weight:bold;">及值</div>
<div style="left:517px;top:570px;width:72px;height:37px;background:#e1e1e1;border:1px solid #adadad;box-sizing:border-box;"></div>
<div class="t" style="left:507.0px;top:572.0px;width:92px;text-align:center;font-size:14px;line-height:18px;font-family:'Liberation Serif', serif;color:#222;font-weight:bold;">导出波峰</div>
<div class="t" style="left:507.0px;top:588.0px;width:92px;text-align:center;font-size:14px;line-height:18px;font-family:'Liberation Serif', serif;color:#222;font-weight:bold;">数据</div>
<div style="left:519px;top:614px;width:73px;height:37px;background:#e1e1e1;border:1px solid #adadad;box-sizing:border-box;"></div>
<div class="t" style="left:509.0px;top:616.0px;width:93px;text-align:center;font-size:14px;line-height:18px;font-family:'Liberation Serif', serif;color:#222;font-weight:bold;">手动选区</div>
<div class="t" style="left:509.0px;top:632.0px;width:93px;text-align:center;font-size:14px;line-height:18px;font-family:'Liberation Serif', serif;color:#222;font-weight:bold;">分析</div>
<div style="left:519px;top:651px;width:73px;height:38px;background:#e1e1e1;border:1px solid #adadad;box-sizing:border-box;"></div>
<div class="t" style="left:509.0px;top:653.3px;width:93px;text-align:center;font-size:14px;line-height:18px;font-family:'Liberation Serif', serif;color:#222;font-weight:bold;">自动选区</div>
<div class="t" style="left:509.0px;top:669.7px;width:93px;text-align:center;font-size:14px;line-height:18px;font-family:'Liberation Serif', serif;color:#222;font-weight:bold;">分析</div>
<div style="left:519px;top:689px;width:73px;height:38px;background:#e1e1e1;border:1px solid #adadad;box-sizing:border-box;"></div>
<div class="t" style="left:509.0px;top:691.3px;width:93px;text-align:center;font-size:14px;line-height:18px;font-family:'Liberation Serif', serif;color:#222;font-weight:bold;">导出分析</div>
<div class="t" style="left:509.0px;top:707.7px;width:93px;text-align:center;font-size:14px;line-height:18px;font-family:'Liberation Serif', serif;color:#222;font-weight:bold;">数据</div>
<div style="left:520px;top:732px;width:12px;height:12px;border:1px solid #333;box-sizing:border-box;background:#fff;"></div>
<div class="t" style="left:538px;top:730.0px;font-size:12px;line-height:16px;font-family:'Liberation Sans', sans-serif;color:#222;">计算方式2</div>
<div style="left:596px;top:476px;width:388px;height:133px;overflow:hidden;">
</div>
<div style="left:596px;top:476px;width:388px;height:133px;background:#fff;border:1px solid #adadad;box-sizing:border-box;"></div>
<div class="t" style="left:575.5px;top:479.6px;width:120px;text-align:center;font-size:12.8px;line-height:16.8px;font-family:'Liberation Sans', sans-serif;color:#111;font-weight:bold;">area</div>
<div class="t" style="left:648.0px;top:479.6px;width:120px;text-align:center;font-size:12.8px;line-height:16.8px;font-family:'Liberation Sans', sans-serif;color:#111;font-weight:bold;">&lt;490nm 1</div>
<div class="t" style="left:720.5px;top:479.6px;width:120px;text-align:center;font-size:12.8px;line-height:16.8px;font-family:'Liberation Sans', sans-serif;color:#111;font-weight:bold;">peak1</div>
<div class="t" style="left:792.5px;top:479.6px;width:120px;text-align:center;font-size:12.8px;line-height:16.8px;font-family:'Liberation Sans', sans-serif;color:#111;font-weight:bold;">&lt;490nm 2</div>
<div class="t" style="left:864.5px;top:479.6px;width:120px;text-align:center;font-size:12.8px;line-height:16.8px;font-family:'Liberation Sans', sans-serif;color:#111;font-weight:bold;">peak2</div>
<div class="t" style="left:953px;top:479.6px;font-size:12.8px;line-height:16.8px;font-family:'Liberation Sans', sans-serif;color:#111;font-weight:bold;">49</div>
<div style="left:611px;top:478px;width:1px;height:114px;background:#e3e3e3;"></div>
<div style="left:660px;top:478px;width:1px;height:114px;background:#e3e3e3;"></div>
<div style="left:756px;top:478px;width:1px;height:114px;background:#e3e3e3;"></div>
<div style="left:805px;top:478px;width:1px;height:114px;background:#e3e3e3;"></div>
<div style="left:900px;top:478px;width:1px;height:114px;background:#e3e3e3;"></div>
<div style="left:949px;top:478px;width:1px;height:114px;background:#e3e3e3;"></div>
<div class="t" style="left:601px;top:504.2px;font-size:12.8px;line-height:16.8px;font-family:'Liberation Sans', sans-serif;color:#222;">1</div>
<div class="t" style="left:615px;top:504.2px;font-size:12.8px;line-height:16.8px;font-family:'Liberation Sans', sans-serif;color:#222;">ROI1</div>
<div class="t" style="left:664px;top:504.2px;font-size:12.8px;line-height:16.8px;font-family:'Liberation Sans', sans-serif;color:#222;">0</div>
<div class="t" style="left:760px;top:504.2px;font-size:12.8px;line-height:16.8px;font-family:'Liberation Sans', sans-serif;color:#222;">0</div>
<div class="t" style="left:809px;top:504.2px;font-size:12.8px;line-height:16.8px;font-family:'Liberation Sans', sans-serif;color:#222;">0</div>
<div class="t" style="left:904px;top:504.2px;font-size:12.8px;line-height:16.8px;font-family:'Liberation Sans', sans-serif;color:#222;">0</div>
<div class="t" style="left:953px;top:504.2px;font-size:12.8px;line-height:16.8px;font-family:'Liberation Sans', sans-serif;color:#222;">55</div>
<div style="left:611px;top:526.6px;width:355px;height:1px;background:#e3e3e3;"></div>
<div class="t" style="left:601px;top:533.6px;font-size:12.8px;line-height:16.8px;font-family:'Liberation Sans', sans-serif;color:#222;">2</div>
<div class="t" style="left:615px;top:533.6px;font-size:12.8px;line-height:16.8px;font-family:'Liberation Sans', sans-serif;color:#222;">ROI2</div>
<div class="t" style="left:664px;top:533.6px;font-size:12.8px;line-height:16.8px;font-family:'Liberation Sans', sans-serif;color:#222;">469</div>
<div class="t" style="left:760px;top:533.6px;font-size:12.8px;line-height:16.8px;font-family:'Liberation Sans', sans-serif;color:#222;">259</div>
<div class="t" style="left:809px;top:533.6px;font-size:12.8px;line-height:16.8px;font-family:'Liberation Sans', sans-serif;color:#222;">0</div>
<div class="t" style="left:904px;top:533.6px;font-size:12.8px;line-height:16.8px;font-family:'Liberation Sans', sans-serif;color:#222;">0</div>
<div class="t" style="left:953px;top:533.6px;font-size:12.8px;line-height:16.8px;font-family:'Liberation Sans', sans-serif;color:#222;">56</div>
<div style="left:611px;top:556.0px;width:355px;height:1px;background:#e3e3e3;"></div>
<div class="t" style="left:601px;top:563.0px;font-size:12.8px;line-height:16.8px;font-family:'Liberation Sans', sans-serif;color:#222;">3</div>
<div class="t" style="left:615px;top:563.0px;font-size:12.8px;line-height:16.8px;font-family:'Liberation Sans', sans-serif;color:#222;">ROI3</div>
<div class="t" style="left:664px;top:563.0px;font-size:12.8px;line-height:16.8px;font-family:'Liberation Sans', sans-serif;color:#222;">0</div>
<div class="t" style="left:760px;top:563.0px;font-size:12.8px;line-height:16.8px;font-family:'Liberation Sans', sans-serif;color:#222;">0</div>
<div class="t" style="left:809px;top:563.0px;font-size:12.8px;line-height:16.8px;font-family:'Liberation Sans', sans-serif;color:#222;">0</div>
<div class="t" style="left:904px;top:563.0px;font-size:12.8px;line-height:16.8px;font-family:'Liberation Sans', sans-serif;color:#222;">0</div>
<div class="t" style="left:953px;top:563.0px;font-size:12.8px;line-height:16.8px;font-family:'Liberation Sans', sans-serif;color:#222;">55</div>
<div style="left:611px;top:585.4px;width:355px;height:1px;background:#e3e3e3;"></div>
<div style="left:966px;top:477px;width:17px;height:115px;background:#f0f0f0;"></div>
<div style="left:967px;top:495px;width:15px;height:59px;background:#cdcdcd;"></div>
<svg style="left:968.5px;top:479px;" width="12" height="12"><path transform="translate(6,6)" d="M-4 2.0 L0 -2.0 L4 2.0" stroke="#555" stroke-width="1.1" fill="none"/></svg>
<svg style="left:968.5px;top:578px;" width="12" height="12"><path transform="translate(6,6)" d="M-4 -2.0 L0 2.0 L4 -2.0" stroke="#555" stroke-width="1.1" fill="none"/></svg>
<div style="left:597px;top:592px;width:369px;height:16px;background:#f0f0f0;"></div>
<div style="left:614px;top:593px;width:26px;height:14px;background:#cdcdcd;"></div>
<svg style="left:599px;top:594.0px;" width="12" height="12"><path transform="translate(6,6)" d="M2.0 -4 L-2.0 0 L2.0 4" stroke="#555" stroke-width="1.1" fill="none"/></svg>
<svg style="left:952px;top:594.0px;" width="12" height="12"><path transform="translate(6,6)" d="M-2.0 -4 L2.0 0 L-2.0 4" stroke="#555" stroke-width="1.1" fill="none"/></svg>
<div style="left:966px;top:592px;width:17px;height:16px;background:#f0f0f0;"></div>
<div style="left:596px;top:613px;width:388px;height:136px;background:#fff;border:1px solid #adadad;box-sizing:border-box;"></div>
<div class="t" style="left:601.5px;top:617.6px;width:120px;text-align:center;font-size:12.8px;line-height:16.8px;font-family:'Liberation Sans', sans-serif;color:#111;">ROI</div>
<div class="t" style="left:702.0px;top:617.6px;width:120px;text-align:center;font-size:12.8px;line-height:16.8px;font-family:'Liberation Sans', sans-serif;color:#111;">Aspectratio</div>
<div class="t" style="left:802.0px;top:617.6px;width:120px;text-align:center;font-size:12.8px;line-height:16.8px;font-family:'Liberation Sans', sans-serif;color:#111;">CalibratedArea</div>
<div class="t" style="left:932px;top:617.6px;font-size:12.8px;line-height:16.8px;font-family:'Liberation Sans', sans-serif;color:#111;">Circul</div>
<div style="left:611px;top:615px;width:1px;height:117px;background:#e3e3e3;"></div>
<div style="left:712px;top:615px;width:1px;height:117px;background:#e3e3e3;"></div>
<div style="left:812px;top:615px;width:1px;height:117px;background:#e3e3e3;"></div>
<div style="left:912px;top:615px;width:1px;height:117px;background:#e3e3e3;"></div>
<div class="t" style="left:601px;top:643.3px;font-size:12.8px;line-height:16.8px;font-family:'Liberation Sans', sans-serif;color:#222;">1</div>
<div class="t" style="left:615px;top:643.3px;font-size:12.8px;line-height:16.8px;font-family:'Liberation Sans', sans-serif;color:#222;">ROI1</div>
<div class="t" style="left:716px;top:643.3px;font-size:12.8px;line-height:16.8px;font-family:'Liberation Sans', sans-serif;color:#222;">1.000</div>
<div class="t" style="left:816px;top:643.3px;font-size:12.8px;line-height:16.8px;font-family:'Liberation Sans', sans-serif;color:#222;">6625.000</div>
<div class="t" style="left:916px;top:643.3px;font-size:12.8px;line-height:16.8px;font-family:'Liberation Sans', sans-serif;color:#222;">0.878</div>
<div style="left:611px;top:666.2px;width:355px;height:1px;background:#e3e3e3;"></div>
<div class="t" style="left:601px;top:673.1px;font-size:12.8px;line-height:16.8px;font-family:'Liberation Sans', sans-serif;color:#222;">2</div>
<div class="t" style="left:615px;top:673.1px;font-size:12.8px;line-height:16.8px;font-family:'Liberation Sans', sans-serif;color:#222;">ROI2</div>
<div class="t" style="left:716px;top:673.1px;font-size:12.8px;line-height:16.8px;font-family:'Liberation Sans', sans-serif;color:#222;">1.000</div>
<div class="t" style="left:816px;top:673.1px;font-size:12.8px;line-height:16.8px;font-family:'Liberation Sans', sans-serif;color:#222;">23769.000</div>
<div class="t" style="left:916px;top:673.1px;font-size:12.8px;line-height:16.8px;font-family:'Liberation Sans', sans-serif;color:#222;">0.889</div>
<div style="left:611px;top:696.0px;width:355px;height:1px;background:#e3e3e3;"></div>
<div class="t" style="left:601px;top:702.9px;font-size:12.8px;line-height:16.8px;font-family:'Liberation Sans', sans-serif;color:#222;">3</div>
<div class="t" style="left:615px;top:702.9px;font-size:12.8px;line-height:16.8px;font-family:'Liberation Sans', sans-serif;color:#222;">ROI3</div>
<div class="t" style="left:716px;top:702.9px;font-size:12.8px;line-height:16.8px;font-family:'Liberation Sans', sans-serif;color:#222;">1.000</div>
<div class="t" style="left:816px;top:702.9px;font-size:12.8px;line-height:16.8px;font-family:'Liberation Sans', sans-serif;color:#222;">6625.000</div>
<div class="t" style="left:916px;top:702.9px;font-size:12.8px;line-height:16.8px;font-family:'Liberation Sans', sans-serif;color:#222;">0.878</div>
<div style="left:611px;top:725.8000000000001px;width:355px;height:1px;background:#e3e3e3;"></div>
<div style="left:966px;top:614px;width:17px;height:119px;background:#f0f0f0;"></div>
<div style="left:967px;top:630px;width:15px;height:64px;background:#cdcdcd;"></div>
<svg style="left:968.5px;top:616px;" width="12" height="12"><path transform="translate(6,6)" d="M-4 2.0 L0 -2.0 L4 2.0" stroke="#555" stroke-width="1.1" fill="none"/></svg>
<svg style="left:968.5px;top:719px;" width="12" height="12"><path transform="translate(6,6)" d="M-4 -2.0 L0 2.0 L4 -2.0" stroke="#555" stroke-width="1.1" fill="none"/></svg>
<div style="left:597px;top:733px;width:369px;height:15px;background:#f0f0f0;"></div>
<div style="left:614px;top:734px;width:143px;height:13px;background:#cdcdcd;"></div>
<svg style="left:599px;top:734.5px;" width="12" height="12"><path transform="translate(6,6)" d="M2.0 -4 L-2.0 0 L2.0 4" stroke="#555" stroke-width="1.1" fill="none"/></svg>
<svg style="left:952px;top:734.5px;" width="12" height="12"><path transform="translate(6,6)" d="M-2.0 -4 L2.0 0 L-2.0 4" stroke="#555" stroke-width="1.1" fill="none"/></svg>
<div style="left:966px;top:733px;width:17px;height:15px;background:#f0f0f0;"></div>
<div style="left:986px;top:147px;width:199px;height:223px;background:#fff;border:1px solid #d9d9d9;box-sizing:border-box;"></div>
<div style="left:986px;top:129.5px;width:55px;height:19px;background:#fff;border:1px solid #d9d9d9;border-bottom:none;box-sizing:border-box;z-index:2;"></div>
<div class="t" style="left:976.0px;top:131.5px;width:75px;text-align:center;font-size:12px;line-height:16px;font-family:'Liberation Sans', sans-serif;color:#333;z-index:3;">区域1</div>
<div style="left:1041px;top:131px;width:29px;height:16.5px;background:#f0f0f0;border:1px solid #d9d9d9;border-bottom:none;box-sizing:border-box;"></div>
<div class="t" style="left:1031.0px;top:132.2px;width:49px;text-align:center;font-size:12px;line-height:16px;font-family:'Liberation Sans', sans-serif;color:#333;z-index:3;">2</div>
<div style="left:1070px;top:131px;width:29px;height:16.5px;background:#f0f0f0;border:1px solid #d9d9d9;border-bottom:none;box-sizing:border-box;"></div>
<div class="t" style="left:1060.0px;top:132.2px;width:49px;text-align:center;font-size:12px;line-height:16px;font-family:'Liberation Sans', sans-serif;color:#333;z-index:3;">3</div>
<div style="left:989.5px;top:153px;width:71px;height:18px;background:#e1e1e1;border:1px solid #adadad;box-sizing:border-box;"></div>
<div class="t" style="left:979.5px;top:153.0px;width:91px;text-align:center;font-size:14px;line-height:18px;font-family:'Liberation Serif', serif;color:#333;">全选</div>
<div style="left:988px;top:172px;width:192px;height:190px;background:#fff;border:1px solid #adadad;box-sizing:border-box;"></div>
<div class="t" style="left:992.0px;top:178.0px;width:60px;text-align:center;font-size:12px;line-height:16px;font-family:'Liberation Sans', sans-serif;color:#222;">复选</div>
<div class="t" style="left:1086.0px;top:178.0px;width:60px;text-align:center;font-size:12px;line-height:16px;font-family:'Liberation Sans', sans-serif;color:#222;">区域</div>
<div style="left:1053px;top:174px;width:1px;height:24px;background:#e8e8e8;"></div>
<div style="left:986px;top:391px;width:199px;height:358px;background:#fff;border:1px solid #d9d9d9;box-sizing:border-box;"></div>
<div style="left:986px;top:374px;width:53px;height:18.5px;background:#fff;border:1px solid #d9d9d9;border-bottom:none;box-sizing:border-box;z-index:2;"></div>
<div class="t" style="left:976.0px;top:375.8px;width:73px;text-align:center;font-size:12px;line-height:16px;font-family:'Liberation Sans', sans-serif;color:#333;z-index:3;">图参</div>
<div style="left:987px;top:393px;width:194px;height:349px;background:#fff;border:1px solid #adadad;box-sizing:border-box;"></div>
<div style="left:1163px;top:394px;width:17px;height:345px;background:#f0f0f0;"></div>
<div style="left:1164px;top:412px;width:15px;height:89px;background:#cdcdcd;"></div>
<svg style="left:1165.5px;top:396px;" width="12" height="12"><path transform="translate(6,6)" d="M-4 2.0 L0 -2.0 L4 2.0" stroke="#555" stroke-width="1.1" fill="none"/></svg>
<svg style="left:1165.5px;top:725px;" width="12" height="12"><path transform="translate(6,6)" d="M-4 -2.0 L0 2.0 L4 -2.0" stroke="#555" stroke-width="1.1" fill="none"/></svg>
<svg style="left:991px;top:422px;" width="12" height="12"><path transform="translate(6,6)" d="M-4 -2.0 L0 2.0 L4 -2.0" stroke="#333" stroke-width="1.1" fill="none"/></svg>
<div style="left:1010.5px;top:421.5px;width:12px;height:12px;border:1px solid #333;box-sizing:border-box;background:#fff;"></div>
<svg style="left:1010.5px;top:421.5px;" width="12" height="12"><path d="M2.5 6.5 L5.2 9.2 L10.5 3.5" stroke="#222" stroke-width="1.2" fill="none"/></svg>
<div class="t" style="left:1028px;top:420.0px;font-size:12px;line-height:16px;font-family:'Liberation Sans', sans-serif;color:#111;">反射光谱指数-VNIR</div>
<div style="left:1030.5px;top:439.7px;width:12px;height:12px;border:1px solid #333;box-sizing:border-box;background:#fff;"></div>
<svg style="left:1030.5px;top:439.7px;" width="12" height="12"><path d="M2.5 6.5 L5.2 9.2 L10.5 3.5" stroke="#222" stroke-width="1.2" fill="none"/></svg>
<div class="t" style="left:1048px;top:437.7px;font-size:12px;line-height:16px;font-family:'Liberation Sans', sans-serif;color:#111;">ARI1</div>
<div style="left:1030.5px;top:457.32px;width:12px;height:12px;border:1px solid #333;box-sizing:border-box;background:#fff;"></div>
<svg style="left:1030.5px;top:457.32px;" width="12" height="12"><path d="M2.5 6.5 L5.2 9.2 L10.5 3.5" stroke="#222" stroke-width="1.2" fill="none"/></svg>
<div class="t" style="left:1048px;top:455.3px;font-size:12px;line-height:16px;font-family:'Liberation Sans', sans-serif;color:#111;">ARI2</div>
<div style="left:1030.5px;top:474.94px;width:12px;height:12px;border:1px solid #333;box-sizing:border-box;background:#fff;"></div>
<svg style="left:1030.5px;top:474.94px;" width="12" height="12"><path d="M2.5 6.5 L5.2 9.2 L10.5 3.5" stroke="#222" stroke-width="1.2" fill="none"/></svg>
<div class="t" style="left:1048px;top:472.9px;font-size:12px;line-height:16px;font-family:'Liberation Sans', sans-serif;color:#111;">ARVI</div>
<div style="left:1030.5px;top:492.56px;width:12px;height:12px;border:1px solid #333;box-sizing:border-box;background:#fff;"></div>
<svg style="left:1030.5px;top:492.56px;" width="12" height="12"><path d="M2.5 6.5 L5.2 9.2 L10.5 3.5" stroke="#222" stroke-width="1.2" fill="none"/></svg>
<div class="t" style="left:1048px;top:490.6px;font-size:12px;line-height:16px;font-family:'Liberation Sans', sans-serif;color:#111;">CAI</div>
<div style="left:1030.5px;top:510.17999999999995px;width:12px;height:12px;border:1px solid #333;box-sizing:border-box;background:#fff;"></div>
<svg style="left:1030.5px;top:510.17999999999995px;" width="12" height="12"><path d="M2.5 6.5 L5.2 9.2 L10.5 3.5" stroke="#222" stroke-width="1.2" fill="none"/></svg>
<div class="t" style="left:1048px;top:508.2px;font-size:12px;line-height:16px;font-family:'Liberation Sans', sans-serif;color:#111;">CCCI</div>
<div style="left:1030.5px;top:527.8px;width:12px;height:12px;border:1px solid #333;box-sizing:border-box;background:#fff;"></div>
<svg style="left:1030.5px;top:527.8px;" width="12" height="12"><path d="M2.5 6.5 L5.2 9.2 L10.5 3.5" stroke="#222" stroke-width="1.2" fill="none"/></svg>
<div class="t" style="left:1048px;top:525.8px;font-size:12px;line-height:16px;font-family:'Liberation Sans', sans-serif;color:#111;">Ctr1</div>
<div style="left:1030.5px;top:545.42px;width:12px;height:12px;border:1px solid #333;box-sizing:border-box;background:#fff;"></div>
<svg style="left:1030.5px;top:545.42px;" width="12" height="12"><path d="M2.5 6.5 L5.2 9.2 L10.5 3.5" stroke="#222" stroke-width="1.2" fill="none"/></svg>
<div class="t" style="left:1048px;top:543.4px;font-size:12px;line-height:16px;font-family:'Liberation Sans', sans-serif;color:#111;">Ctr2</div>
<div style="left:1030.5px;top:563.04px;width:12px;height:12px;border:1px solid #333;box-sizing:border-box;background:#fff;"></div>
<svg style="left:1030.5px;top:563.04px;" width="12" height="12"><path d="M2.5 6.5 L5.2 9.2 L10.5 3.5" stroke="#222" stroke-width="1.2" fill="none"/></svg>
<div class="t" style="left:1048px;top:561.0px;font-size:12px;line-height:16px;font-family:'Liberation Sans', sans-serif;color:#111;">CRI1</div>
<div style="left:1030.5px;top:580.66px;width:12px;height:12px;border:1px solid #333;box-sizing:border-box;background:#fff;"></div>
<svg style="left:1030.5px;top:580.66px;" width="12" height="12"><path d="M2.5 6.5 L5.2 9.2 L10.5 3.5" stroke="#222" stroke-width="1.2" fill="none"/></svg>
<div class="t" style="left:1048px;top:578.7px;font-size:12px;line-height:16px;font-family:'Liberation Sans', sans-serif;color:#111;">CRI2</div>
<div style="left:1030.5px;top:598.28px;width:12px;height:12px;border:1px solid #333;box-sizing:border-box;background:#fff;"></div>
<svg style="left:1030.5px;top:598.28px;" width="12" height="12"><path d="M2.5 6.5 L5.2 9.2 L10.5 3.5" stroke="#222" stroke-width="1.2" fill="none"/></svg>
<div class="t" style="left:1048px;top:596.3px;font-size:12px;line-height:16px;font-family:'Liberation Sans', sans-serif;color:#111;">CustomVI1</div>
<div style="left:1030.5px;top:615.9px;width:12px;height:12px;border:1px solid #333;box-sizing:border-box;background:#fff;"></div>
<svg style="left:1030.5px;top:615.9px;" width="12" height="12"><path d="M2.5 6.5 L5.2 9.2 L10.5 3.5" stroke="#222" stroke-width="1.2" fill="none"/></svg>
<div class="t" style="left:1048px;top:613.9px;font-size:12px;line-height:16px;font-family:'Liberation Sans', sans-serif;color:#111;">DVI</div>
<div style="left:1030.5px;top:633.52px;width:12px;height:12px;border:1px solid #333;box-sizing:border-box;background:#fff;"></div>
<svg style="left:1030.5px;top:633.52px;" width="12" height="12"><path d="M2.5 6.5 L5.2 9.2 L10.5 3.5" stroke="#222" stroke-width="1.2" fill="none"/></svg>
<div class="t" style="left:1048px;top:631.5px;font-size:12px;line-height:16px;font-family:'Liberation Sans', sans-serif;color:#111;">EVI</div>
<div style="left:1030.5px;top:651.14px;width:12px;height:12px;border:1px solid #333;box-sizing:border-box;background:#fff;"></div>
<svg style="left:1030.5px;top:651.14px;" width="12" height="12"><path d="M2.5 6.5 L5.2 9.2 L10.5 3.5" stroke="#222" stroke-width="1.2" fill="none"/></svg>
<div class="t" style="left:1048px;top:649.1px;font-size:12px;line-height:16px;font-family:'Liberation Sans', sans-serif;color:#111;">FRI</div>
<div style="left:1030.5px;top:668.76px;width:12px;height:12px;border:1px solid #333;box-sizing:border-box;background:#fff;"></div>
<svg style="left:1030.5px;top:668.76px;" width="12" height="12"><path d="M2.5 6.5 L5.2 9.2 L10.5 3.5" stroke="#222" stroke-width="1.2" fill="none"/></svg>
<div class="t" style="left:1048px;top:666.8px;font-size:12px;line-height:16px;font-family:'Liberation Sans', sans-serif;color:#111;">GARI</div>
<div style="left:1030.5px;top:686.38px;width:12px;height:12px;border:1px solid #333;box-sizing:border-box;background:#fff;"></div>
<svg style="left:1030.5px;top:686.38px;" width="12" height="12"><path d="M2.5 6.5 L5.2 9.2 L10.5 3.5" stroke="#222" stroke-width="1.2" fill="none"/></svg>
<div class="t" style="left:1048px;top:684.4px;font-size:12px;line-height:16px;font-family:'Liberation Sans', sans-serif;color:#111;">GCI</div>
<div style="left:1030.5px;top:704.0px;width:12px;height:12px;border:1px solid #333;box-sizing:border-box;background:#fff;"></div>
<svg style="left:1030.5px;top:704.0px;" width="12" height="12"><path d="M2.5 6.5 L5.2 9.2 L10.5 3.5" stroke="#222" stroke-width="1.2" fill="none"/></svg>
<div class="t" style="left:1048px;top:702.0px;font-size:12px;line-height:16px;font-family:'Liberation Sans', sans-serif;color:#111;">GDVI</div>
<div style="left:1030.5px;top:721.62px;width:12px;height:12px;border:1px solid #333;box-sizing:border-box;background:#fff;"></div>
<svg style="left:1030.5px;top:721.62px;" width="12" height="12"><path d="M2.5 6.5 L5.2 9.2 L10.5 3.5" stroke="#222" stroke-width="1.2" fill="none"/></svg>
<div class="t" style="left:1048px;top:719.6px;font-size:12px;line-height:16px;font-family:'Liberation Sans', sans-serif;color:#111;">GI</div>
<div style="left:1030.5px;top:735px;width:12px;height:4px;border:1px solid #333;border-bottom:none;box-sizing:border-box;background:#fff;"></div>
<div style="left:1189.5px;top:3px;width:1119px;height:776px;background:#f0f0f0;border:1px solid #666a6e;border-left:1.5px solid #3a3f44;box-sizing:border-box;"></div>
<div style="left:1190px;top:4px;width:1117px;height:49px;background:#fff;"></div>
<div style="left:1198px;top:12px;width:14px;height:12px;border:1px solid #8aa;box-sizing:border-box;background:linear-gradient(90deg,#3d7a6a 0 45%,#dfe7e7 45%);"></div>
<div class="t" style="left:1218px;top:9.0px;font-size:13px;line-height:17px;font-family:'Liberation Sans', sans-serif;color:#111;">FluorVision</div>
<div style="left:2180px;top:17px;width:11px;height:1px;background:#333;"></div>
<div style="left:2232px;top:12px;width:10px;height:10px;border:1px solid #333;box-sizing:border-box;"></div>
<svg style="left:2277px;top:12px;" width="12" height="12"><path d="M1 1 L11 11 M11 1 L1 11" stroke="#333" stroke-width="1.1"/></svg>
<div class="t" style="left:1197px;top:34.5px;font-size:12px;line-height:16px;font-family:'Liberation Sans', sans-serif;color:#111;">选区分析</div>
<div class="t" style="left:1261px;top:34.5px;font-size:12px;line-height:16px;font-family:'Liberation Sans', sans-serif;color:#111;">功能</div>
<div style="left:1190px;top:53px;width:1117px;height:9px;background:#f0f0f0;"></div>
<div style="left:1190px;top:61px;width:1117px;height:1px;background:#d8d8d8;"></div>
<div class="t" style="left:1193px;top:52px;font-size:8px;line-height:10px;color:#999;">:</div>
<div class="t" style="left:1196px;top:82.0px;font-size:14px;line-height:18px;font-family:'Liberation Serif', serif;color:#333;">选择DAT文件</div>
<div style="left:1284px;top:82.5px;width:406px;height:19px;background:#fff;border:1px solid #7a7a7a;box-sizing:border-box;"></div>
<div class="t" style="left:1287px;top:84.0px;font-size:13.5px;line-height:17.5px;font-family:'Liberation Mono', monospace;letter-spacing:-1.01px;color:#111;">E:/data/365-1102/huanglu/FM D mask.dat</div>
<div style="left:1692px;top:83px;width:91px;height:18.5px;background:#e1e1e1;border:1px solid #adadad;box-sizing:border-box;"></div>
<div class="t" style="left:1682.0px;top:83.2px;width:111px;text-align:center;font-size:14px;line-height:18px;font-family:'Liberation Serif', serif;color:#333;">选择dat文件</div>
<div class="t" style="left:1841px;top:83.0px;font-size:14px;line-height:18px;font-family:'Liberation Serif', serif;color:#333;">水平像素宽度</div>
<div style="left:1937.5px;top:82.5px;width:64px;height:19px;background:#fff;border:1px solid #7a7a7a;box-sizing:border-box;"></div>
<div class="t" style="left:1940.5px;top:84.0px;font-size:13.5px;line-height:17.5px;font-family:'Liberation Mono', monospace;letter-spacing:-1.01px;color:#111;">0.0200</div>
<div class="t" style="left:2012px;top:83.0px;font-size:13.5px;line-height:17.5px;font-family:'Liberation Mono', monospace;letter-spacing:-1.01px;color:#333;">cm</div>
<div class="t" style="left:2048px;top:83.0px;font-size:14px;line-height:18px;font-family:'Liberation Serif', serif;color:#333;">垂直像素宽度</div>
<div style="left:2142px;top:82.5px;width:64px;height:19px;background:#fff;border:1px solid #7a7a7a;box-sizing:border-box;"></div>
<div class="t" style="left:2145px;top:84.0px;font-size:13.5px;line-height:17.5px;font-family:'Liberation Mono', monospace;letter-spacing:-1.01px;color:#111;">0.0200</div>
<div class="t" style="left:2215px;top:83.0px;font-size:13.5px;line-height:17.5px;font-family:'Liberation Mono', monospace;letter-spacing:-1.01px;color:#333;">cm</div>
<div class="t" style="left:1201px;top:117.0px;font-size:14px;line-height:18px;font-family:'Liberation Serif', serif;color:#333;">可视化表达</div>
<div style="left:1283px;top:115px;width:406px;height:20.5px;background:#e5e5e5;border:1px solid #adadad;box-sizing:border-box;"></div>
<svg style="left:1672px;top:119.25px;" width="12" height="12"><path transform="translate(6,6)" d="M-4 -2.0 L0 2.0 L4 -2.0" stroke="#444" stroke-width="1.1" fill="none"/></svg>
<div style="left:1287.5px;top:121px;width:277px;height:8px;background:linear-gradient(90deg,#2ee82e 0%,#c7f22a 30%,#f7c22a 55%,#f57a22 75%,#ee2a20 100%);"></div>
<div class="t" style="left:1567px;top:117.5px;font-size:13px;line-height:17px;font-family:'Liberation Sans', sans-serif;color:#333;">绿红</div>
<div style="left:1692px;top:119.5px;width:12px;height:12px;border:1px solid #333;box-sizing:border-box;background:#fff;"></div>
<div class="t" style="left:1710px;top:118.0px;font-size:12px;line-height:16px;font-family:'Liberation Sans', sans-serif;color:#222;">逆时针90°</div>
<div style="left:1771.5px;top:119.5px;width:12px;height:12px;border:1px solid #333;box-sizing:border-box;background:#fff;"></div>
<div class="t" style="left:1789px;top:118.0px;font-size:12px;line-height:16px;font-family:'Liberation Sans', sans-serif;color:#222;">顺时针90°</div>
<div style="left:1192px;top:164px;width:85px;height:514px;background:#fff;border:1px solid #adadad;box-sizing:border-box;"></div>
<div style="left:1260px;top:165px;width:16px;height:512px;background:#f0f0f0;"></div>
<div style="left:1261px;top:180px;width:14px;height:60px;background:#cdcdcd;"></div>
<svg style="left:1262.0px;top:167px;" width="12" height="12"><path transform="translate(6,6)" d="M-4 2.0 L0 -2.0 L4 2.0" stroke="#555" stroke-width="1.1" fill="none"/></svg>
<svg style="left:1262.0px;top:663px;" width="12" height="12"><path transform="translate(6,6)" d="M-4 -2.0 L0 2.0 L4 -2.0" stroke="#555" stroke-width="1.1" fill="none"/></svg>
<div class="t" style="left:1196.0px;top:168.0px;width:60px;text-align:center;font-size:13px;line-height:17px;font-family:'Liberation Sans', sans-serif;color:#111;">Bands</div>
<div class="t" style="left:1196.0px;top:186.7px;width:60px;text-align:center;font-size:13px;line-height:17px;font-family:'Liberation Sans', sans-serif;color:#222;">397.7</div>
<div class="t" style="left:1196.0px;top:203.7px;width:60px;text-align:center;font-size:13px;line-height:17px;font-family:'Liberation Sans', sans-serif;color:#222;">400.3</div>
<div class="t" style="left:1196.0px;top:220.7px;width:60px;text-align:center;font-size:13px;line-height:17px;font-family:'Liberation Sans', sans-serif;color:#222;">402.9</div>
<div class="t" style="left:1196.0px;top:237.7px;width:60px;text-align:center;font-size:13px;line-height:17px;font-family:'Liberation Sans', sans-serif;color:#222;">405.5</div>
<div class="t" style="left:1196.0px;top:254.7px;width:60px;text-align:center;font-size:13px;line-height:17px;font-family:'Liberation Sans', sans-serif;color:#222;">408.1</div>
<div class="t" style="left:1196.0px;top:271.7px;width:60px;text-align:center;font-size:13px;line-height:17px;font-family:'Liberation Sans', sans-serif;color:#222;">410.8</div>
<div class="t" style="left:1196.0px;top:288.7px;width:60px;text-align:center;font-size:13px;line-height:17px;font-family:'Liberation Sans', sans-serif;color:#222;">413.4</div>
<div class="t" style="left:1196.0px;top:305.7px;width:60px;text-align:center;font-size:13px;line-height:17px;font-family:'Liberation Sans', sans-serif;color:#222;">416.0</div>
<div class="t" style="left:1196.0px;top:322.7px;width:60px;text-align:center;font-size:13px;line-height:17px;font-family:'Liberation Sans', sans-serif;color:#222;">418.6</div>
<div class="t" style="left:1196.0px;top:339.7px;width:60px;text-align:center;font-size:13px;line-height:17px;font-family:'Liberation Sans', sans-serif;color:#222;">421.2</div>
<div class="t" style="left:1196.0px;top:356.7px;width:60px;text-align:center;font-size:13px;line-height:17px;font-family:'Liberation Sans', sans-serif;color:#222;">423.9</div>
<div class="t" style="left:1196.0px;top:373.7px;width:60px;text-align:center;font-size:13px;line-height:17px;font-family:'Liberation Sans', sans-serif;color:#222;">426.5</div>
<div class="t" style="left:1196.0px;top:390.7px;width:60px;text-align:center;font-size:13px;line-height:17px;font-family:'Liberation Sans', sans-serif;color:#222;">429.1</div>
<div class="t" style="left:1196.0px;top:407.7px;width:60px;text-align:center;font-size:13px;line-height:17px;font-family:'Liberation Sans', sans-serif;color:#222;">431.7</div>
<div class="t" style="left:1196.0px;top:424.7px;width:60px;text-align:center;font-size:13px;line-height:17px;font-family:'Liberation Sans', sans-serif;color:#222;">434.4</div>
<div class="t" style="left:1196.0px;top:441.7px;width:60px;text-align:center;font-size:13px;line-height:17px;font-family:'Liberation Sans', sans-serif;color:#222;">437.0</div>
<div class="t" style="left:1196.0px;top:458.7px;width:60px;text-align:center;font-size:13px;line-height:17px;font-family:'Liberation Sans', sans-serif;color:#222;">439.6</div>
<div class="t" style="left:1196.0px;top:475.7px;width:60px;text-align:center;font-size:13px;line-height:17px;font-family:'Liberation Sans', sans-serif;color:#222;">442.3</div>
<div class="t" style="left:1196.0px;top:492.7px;width:60px;text-align:center;font-size:13px;line-height:17px;font-family:'Liberation Sans', sans-serif;color:#222;">444.9</div>
<div class="t" style="left:1196.0px;top:509.7px;width:60px;text-align:center;font-size:13px;line-height:17px;font-family:'Liberation Sans', sans-serif;color:#222;">447.5</div>
<div class="t" style="left:1196.0px;top:526.7px;width:60px;text-align:center;font-size:13px;line-height:17px;font-family:'Liberation Sans', sans-serif;color:#222;">450.2</div>
<div class="t" style="left:1196.0px;top:543.7px;width:60px;text-align:center;font-size:13px;line-height:17px;font-family:'Liberation Sans', sans-serif;color:#222;">452.8</div>
<div class="t" style="left:1196.0px;top:560.7px;width:60px;text-align:center;font-size:13px;line-height:17px;font-family:'Liberation Sans', sans-serif;color:#222;">455.4</div>
<div class="t" style="left:1196.0px;top:577.7px;width:60px;text-align:center;font-size:13px;line-height:17px;font-family:'Liberation Sans', sans-serif;color:#222;">458.1</div>
<div class="t" style="left:1196.0px;top:594.7px;width:60px;text-align:center;font-size:13px;line-height:17px;font-family:'Liberation Sans', sans-serif;color:#222;">460.7</div>
<div class="t" style="left:1196.0px;top:611.7px;width:60px;text-align:center;font-size:13px;line-height:17px;font-family:'Liberation Sans', sans-serif;color:#222;">463.3</div>
<div class="t" style="left:1196.0px;top:628.7px;width:60px;text-align:center;font-size:13px;line-height:17px;font-family:'Liberation Sans', sans-serif;color:#222;">466.0</div>
<div class="t" style="left:1196.0px;top:645.7px;width:60px;text-align:center;font-size:13px;line-height:17px;font-family:'Liberation Sans', sans-serif;color:#222;">468.6</div>
<div style="left:1193px;top:662px;width:66px;height:15px;background:#3fa3db;"></div>
<div class="t" style="left:1196.0px;top:662.7px;width:60px;text-align:center;font-size:13px;line-height:17px;font-family:'Liberation Sans', sans-serif;color:#7fc3ea;">471.3</div>
<div style="left:1197.5px;top:688px;width:12px;height:12px;border:1px solid #333;border-radius:50%;box-sizing:border-box;background:#fff;"></div>
<div style="left:1200.0px;top:690.5px;width:7px;height:7px;background:#222;border-radius:50%;"></div>
<div class="t" style="left:1215px;top:687.3px;font-size:11px;line-height:15px;font-family:'Liberation Mono', monospace;letter-spacing:-0.82px;color:#333;">B</div>
<div style="left:1232.5px;top:685px;width:44px;height:19px;background:#fff;border:1px solid #7a7a7a;box-sizing:border-box;"></div>
<div class="t" style="left:1235.5px;top:686.5px;font-size:13.5px;line-height:17.5px;font-family:'Liberation Mono', monospace;letter-spacing:-1.01px;color:#111;">471.3</div>
<div style="left:1197.5px;top:716.5px;width:12px;height:12px;border:1px solid #333;border-radius:50%;box-sizing:border-box;background:#fff;"></div>
<div class="t" style="left:1215px;top:715.8px;font-size:11px;line-height:15px;font-family:'Liberation Mono', monospace;letter-spacing:-0.82px;color:#333;">G</div>
<div style="left:1232.5px;top:713px;width:44px;height:19px;background:#fff;border:1px solid #7a7a7a;box-sizing:border-box;"></div>
<div class="t" style="left:1235.5px;top:714.5px;font-size:13.5px;line-height:17.5px;font-family:'Liberation Mono', monospace;letter-spacing:-1.01px;color:#111;">540.2</div>
<div style="left:1197.5px;top:745.5px;width:12px;height:12px;border:1px solid #333;border-radius:50%;box-sizing:border-box;background:#fff;"></div>
<div class="t" style="left:1215px;top:744.8px;font-size:11px;line-height:15px;font-family:'Liberation Mono', monospace;letter-spacing:-0.82px;color:#333;">R</div>
<div style="left:1232.5px;top:742.5px;width:44px;height:19px;background:#fff;border:1px solid #7a7a7a;box-sizing:border-box;"></div>
<div class="t" style="left:1235.5px;top:744.0px;font-size:13.5px;line-height:17.5px;font-family:'Liberation Mono', monospace;letter-spacing:-1.01px;color:#111;">620.6</div>
<div style="left:1281px;top:165px;width:410px;height:594px;background:#fff;border:1px solid #d9d9d9;box-sizing:border-box;"></div>
<div style="left:1281.5px;top:147px;width:78px;height:18px;background:#f0f0f0;border:1px solid #d9d9d9;border-bottom:none;box-sizing:border-box;"></div>
<div class="t" style="left:1271.5px;top:148.0px;width:98px;text-align:center;font-size:14px;line-height:18px;font-family:'Liberation Serif', serif;color:#333;z-index:3;">光谱图像</div>
<div style="left:1359.5px;top:147px;width:81px;height:18px;background:#f0f0f0;border:1px solid #d9d9d9;border-bottom:none;box-sizing:border-box;"></div>
<div class="t" style="left:1349.5px;top:148.0px;width:101px;text-align:center;font-size:14px;line-height:18px;font-family:'Liberation Serif', serif;color:#333;z-index:3;">参数图像</div>
<div style="left:1440.5px;top:145.5px;width:80.5px;height:20.5px;background:#fff;border:1px solid #d9d9d9;border-bottom:none;box-sizing:border-box;z-index:2;"></div>
<div class="t" style="left:1430.5px;top:147.2px;width:100.5px;text-align:center;font-size:14px;line-height:18px;font-family:'Liberation Serif', serif;color:#333;z-index:3;">波段融合</div>
<div style="left:1282px;top:168.5px;width:30px;height:18px;background:#fff;border:1px solid #7a7a7a;box-sizing:border-box;"></div>
<div class="t" style="left:1284px;top:169.0px;font-size:13px;line-height:17px;font-family:'Liberation Sans', sans-serif;color:#111;">674</div>
<div class="t" style="left:1313.5px;top:168.0px;font-size:12px;line-height:16px;font-family:'Liberation Sans', sans-serif;color:#333;">~</div>
<div style="left:1324.5px;top:168.5px;width:31px;height:18px;background:#fff;border:1px solid #7a7a7a;box-sizing:border-box;"></div>
<div class="t" style="left:1326.5px;top:169.0px;font-size:13px;line-height:17px;font-family:'Liberation Sans', sans-serif;color:#111;">753</div>
<div style="left:1359px;top:169px;width:39px;height:17px;background:#e1e1e1;border:1px solid #adadad;box-sizing:border-box;"></div>
<div class="t" style="left:1349.0px;top:168.5px;width:59px;text-align:center;font-size:14px;line-height:18px;font-family:'Liberation Serif', serif;color:#333;">融合</div>
<div class="t" style="left:1401px;top:170.0px;font-size:14px;line-height:18px;font-family:'Liberation Serif', serif;color:#333;">掩膜参数</div>
<div style="left:1465px;top:167.5px;width:70px;height:19.5px;background:#e5e5e5;border:1px solid #adadad;box-sizing:border-box;"></div>
<svg style="left:1518px;top:171.25px;" width="12" height="12"><path transform="translate(6,6)" d="M-4 -2.0 L0 2.0 L4 -2.0" stroke="#444" stroke-width="1.1" fill="none"/></svg>
<div class="t" style="left:1468px;top:171.0px;font-size:10px;line-height:14px;font-family:'Liberation Sans', sans-serif;color:#333;transform:scaleX(0.78);transform-origin:left;">F740/F690</div>
<div style="left:1542.5px;top:173px;width:12px;height:12px;border:1px solid #333;border-radius:50%;box-sizing:border-box;background:#fff;"></div>
<div class="t" style="left:1558px;top:171.1px;font-size:13.5px;line-height:17.5px;font-family:'Liberation Mono', monospace;letter-spacing:-1.01px;color:#333;">1</div>
<div style="left:1575px;top:173px;width:12px;height:12px;border:1px solid #333;border-radius:50%;box-sizing:border-box;background:#fff;"></div>
<div style="left:1577.5px;top:175.5px;width:7px;height:7px;background:#222;border-radius:50%;"></div>
<div class="t" style="left:1590px;top:171.1px;font-size:13.5px;line-height:17.5px;font-family:'Liberation Mono', monospace;letter-spacing:-1.01px;color:#333;">2</div>
<div style="left:1606.5px;top:173px;width:12px;height:12px;border:1px solid #333;border-radius:50%;box-sizing:border-box;background:#fff;"></div>
<div class="t" style="left:1622px;top:171.1px;font-size:13.5px;line-height:17.5px;font-family:'Liberation Mono', monospace;letter-spacing:-1.01px;color:#333;">3</div>
<div style="left:1650px;top:174.5px;width:12px;height:12px;border:1px solid #333;border-radius:50%;box-sizing:border-box;background:#fff;"></div>
<div class="t" style="left:1666px;top:173.1px;font-size:13.5px;line-height:17.5px;font-family:'Liberation Mono', monospace;letter-spacing:-1.01px;color:#333;">1</div>
<div style="left:1650px;top:197px;width:12px;height:12px;border:1px solid #333;border-radius:50%;box-sizing:border-box;background:#fff;"></div>
<div style="left:1652.5px;top:199.5px;width:7px;height:7px;background:#222;border-radius:50%;"></div>
<div class="t" style="left:1666px;top:196.1px;font-size:13.5px;line-height:17.5px;font-family:'Liberation Mono', monospace;letter-spacing:-1.01px;color:#333;">2</div>
<div style="left:1650px;top:220px;width:12px;height:12px;border:1px solid #333;border-radius:50%;box-sizing:border-box;background:#fff;"></div>
<div class="t" style="left:1666px;top:219.1px;font-size:13.5px;line-height:17.5px;font-family:'Liberation Mono', monospace;letter-spacing:-1.01px;color:#333;">3</div>
<div style="left:1286.5px;top:191px;width:45px;height:20px;background:#fff;border:1px solid #7a7a7a;box-sizing:border-box;"></div>
<div class="t" style="left:1289.5px;top:193.1px;font-size:13.5px;line-height:17.5px;font-family:'Liberation Mono', monospace;letter-spacing:-1.01px;color:#111;">0.00</div>
<div style="left:1341px;top:193.5px;width:242px;height:3px;background:#e7e7e7;"></div>
<div style="left:1341px;top:205.5px;width:242px;height:3px;background:#e7e7e7;"></div>
<div style="left:1340.5px;top:190px;width:10px;height:10px;background:#0f78d7;"></div>
<div style="left:1568px;top:202px;width:10.5px;height:10px;background:#0f78d7;"></div>
<div style="left:1588.5px;top:191.5px;width:44px;height:19px;background:#fff;border:1px solid #7a7a7a;box-sizing:border-box;"></div>
<div class="t" style="left:1592.5px;top:193.1px;font-size:13.5px;line-height:17.5px;font-family:'Liberation Mono', monospace;letter-spacing:-1.01px;color:#111;">9.80</div>
<div class="t" style="left:1289px;top:216.0px;font-size:14px;line-height:18px;font-family:'Liberation Serif', serif;color:#333;">噪点阈值</div>
<div style="left:1353px;top:215.5px;width:43px;height:18.5px;background:#fff;border:1px solid #7a7a7a;box-sizing:border-box;"></div>
<div class="t" style="left:1356px;top:216.2px;font-size:13px;line-height:17px;font-family:'Liberation Sans', sans-serif;color:#111;">60</div>
<div style="left:1402px;top:218.5px;width:12px;height:12px;border:1px solid #333;box-sizing:border-box;background:#fff;"></div>
<svg style="left:1402px;top:218.5px;" width="12" height="12"><path d="M2.5 6.5 L5.2 9.2 L10.5 3.5" stroke="#222" stroke-width="1.2" fill="none"/></svg>
<div class="t" style="left:1420px;top:216.0px;font-size:14px;line-height:18px;font-family:'Liberation Serif', serif;color:#333;">自动选区</div>
<div style="left:1553px;top:215.5px;width:77px;height:17.5px;background:#e1e1e1;border:1px solid #adadad;box-sizing:border-box;"></div>
<div class="t" style="left:1543.0px;top:215.2px;width:97px;text-align:center;font-size:14px;line-height:18px;font-family:'Liberation Serif', serif;color:#333;">导出图片</div>
<div style="left:1281px;top:237.5px;width:352px;height:522px;background:#fff;border:1px solid #6cc4b4;box-sizing:border-box;"></div>
<div style="left:1282px;top:255.5px;width:350px;height:503px;background:#000;"></div>
<svg style="left:1282px;top:256px;" width="350" height="503" viewBox="1282 256 350 503"><radialGradient id="g0" gradientUnits="userSpaceOnUse" cx="1380" cy="335" r="82"><stop offset="0" stop-color="#ee7216"/><stop offset="0.7" stop-color="#f2902a"/><stop offset="1" stop-color="#f0c430"/></radialGradient><clipPath id="c0"><path d="M1375.3 286.5 C1384.5 286.2 1395.9 286.8 1405.0 289.0 C1414.1 291.2 1423.0 294.8 1430.0 300.0 C1437.0 305.2 1443.2 313.0 1447.0 320.0 C1450.8 327.0 1452.8 334.5 1453.0 342.0 C1453.2 349.5 1451.2 358.3 1448.0 365.0 C1444.8 371.7 1440.0 376.8 1434.0 382.0 C1428.0 387.2 1419.0 392.0 1412.0 396.0 C1405.0 400.0 1398.1 402.8 1392.0 406.0 C1385.9 409.2 1381.0 415.2 1375.3 415.2 C1369.6 415.2 1364.2 409.2 1358.0 406.0 C1351.8 402.8 1343.7 399.7 1338.0 396.0 C1332.3 392.3 1328.3 389.0 1324.0 384.0 C1319.7 379.0 1314.3 372.4 1312.0 366.0 C1309.7 359.6 1309.7 352.6 1310.2 345.3 C1310.7 338.0 1311.5 329.1 1315.0 322.0 C1318.5 314.9 1325.2 308.2 1331.0 303.0 C1336.8 297.8 1342.6 293.8 1350.0 291.0 C1357.4 288.2 1366.1 286.8 1375.3 286.5 Z"/></clipPath><path d="M1375.3 286.5 C1384.5 286.2 1395.9 286.8 1405.0 289.0 C1414.1 291.2 1423.0 294.8 1430.0 300.0 C1437.0 305.2 1443.2 313.0 1447.0 320.0 C1450.8 327.0 1452.8 334.5 1453.0 342.0 C1453.2 349.5 1451.2 358.3 1448.0 365.0 C1444.8 371.7 1440.0 376.8 1434.0 382.0 C1428.0 387.2 1419.0 392.0 1412.0 396.0 C1405.0 400.0 1398.1 402.8 1392.0 406.0 C1385.9 409.2 1381.0 415.2 1375.3 415.2 C1369.6 415.2 1364.2 409.2 1358.0 406.0 C1351.8 402.8 1343.7 399.7 1338.0 396.0 C1332.3 392.3 1328.3 389.0 1324.0 384.0 C1319.7 379.0 1314.3 372.4 1312.0 366.0 C1309.7 359.6 1309.7 352.6 1310.2 345.3 C1310.7 338.0 1311.5 329.1 1315.0 322.0 C1318.5 314.9 1325.2 308.2 1331.0 303.0 C1336.8 297.8 1342.6 293.8 1350.0 291.0 C1357.4 288.2 1366.1 286.8 1375.3 286.5 Z" fill="url(#g0)" stroke="#62e02a" stroke-width="1.2"/><g clip-path="url(#c0)"><path d="M1376.6 303.1 Q1342.2 288.0 1307.7 257.8" stroke="#f6d050" stroke-width="1.1" fill="none" opacity="0.7"/><path d="M1376.6 303.1 Q1416.2 288.0 1455.8 257.8" stroke="#f6d050" stroke-width="1.1" fill="none" opacity="0.7"/><path d="M1376.2 321.3 Q1342.0 306.1 1307.7 275.9" stroke="#f6d050" stroke-width="1.1" fill="none" opacity="0.7"/><path d="M1376.2 321.3 Q1416.0 306.1 1455.8 275.9" stroke="#f6d050" stroke-width="1.1" fill="none" opacity="0.7"/><path d="M1375.8 339.4 Q1341.8 324.3 1307.8 294.0" stroke="#f6d050" stroke-width="1.1" fill="none" opacity="0.7"/><path d="M1375.8 339.4 Q1415.8 324.3 1455.8 294.0" stroke="#f6d050" stroke-width="1.1" fill="none" opacity="0.7"/><path d="M1375.3 357.6 Q1341.6 342.4 1307.8 312.2" stroke="#f6d050" stroke-width="1.1" fill="none" opacity="0.7"/><path d="M1375.3 357.6 Q1415.6 342.4 1455.8 312.2" stroke="#f6d050" stroke-width="1.1" fill="none" opacity="0.7"/><path d="M1374.9 375.7 Q1341.4 360.6 1307.8 330.3" stroke="#f6d050" stroke-width="1.1" fill="none" opacity="0.7"/><path d="M1374.9 375.7 Q1415.4 360.6 1455.9 330.3" stroke="#f6d050" stroke-width="1.1" fill="none" opacity="0.7"/><path d="M1374.5 393.8 Q1341.2 378.7 1307.8 348.5" stroke="#f6d050" stroke-width="1.1" fill="none" opacity="0.7"/><path d="M1374.5 393.8 Q1415.2 378.7 1455.9 348.5" stroke="#f6d050" stroke-width="1.1" fill="none" opacity="0.7"/><path d="M1377 288 L1374 414" stroke="#f6d050" stroke-width="1.5" opacity="0.95"/><path d="M1375.3 357.3 L1374 414" stroke="#3cc82a" stroke-width="1.5" stroke-dasharray="3 1.5"/></g><radialGradient id="g1" gradientUnits="userSpaceOnUse" cx="1515" cy="338" r="54"><stop offset="0" stop-color="#f4ac28"/><stop offset="0.7" stop-color="#f5be30"/><stop offset="1" stop-color="#e6dc38"/></radialGradient><clipPath id="c1"><path d="M1516.7 297.6 C1525.9 297.8 1536.3 301.8 1543.0 306.0 C1549.7 310.2 1554.0 316.4 1557.0 323.0 C1560.0 329.6 1561.3 338.3 1561.1 345.3 C1560.9 352.3 1559.5 359.6 1556.0 365.0 C1552.5 370.4 1546.8 374.1 1540.0 378.0 C1533.2 381.9 1523.3 388.2 1515.0 388.2 C1506.7 388.2 1496.8 381.9 1490.0 378.0 C1483.2 374.1 1477.7 371.0 1474.0 365.0 C1470.3 359.0 1468.3 349.3 1468.0 342.0 C1467.7 334.7 1468.7 327.2 1472.0 321.0 C1475.3 314.8 1480.5 308.9 1488.0 305.0 C1495.5 301.1 1507.5 297.4 1516.7 297.6 Z"/></clipPath><path d="M1516.7 297.6 C1525.9 297.8 1536.3 301.8 1543.0 306.0 C1549.7 310.2 1554.0 316.4 1557.0 323.0 C1560.0 329.6 1561.3 338.3 1561.1 345.3 C1560.9 352.3 1559.5 359.6 1556.0 365.0 C1552.5 370.4 1546.8 374.1 1540.0 378.0 C1533.2 381.9 1523.3 388.2 1515.0 388.2 C1506.7 388.2 1496.8 381.9 1490.0 378.0 C1483.2 374.1 1477.7 371.0 1474.0 365.0 C1470.3 359.0 1468.3 349.3 1468.0 342.0 C1467.7 334.7 1468.7 327.2 1472.0 321.0 C1475.3 314.8 1480.5 308.9 1488.0 305.0 C1495.5 301.1 1507.5 297.4 1516.7 297.6 Z" fill="url(#g1)" stroke="#62e02a" stroke-width="1.2"/><g clip-path="url(#c1)"><path d="M1515.9 309.6 Q1491.3 299.0 1466.7 277.9" stroke="#f8e060" stroke-width="1.1" fill="none" opacity="0.65"/><path d="M1515.9 309.6 Q1539.0 299.0 1562.2 277.9" stroke="#f8e060" stroke-width="1.1" fill="none" opacity="0.65"/><path d="M1515.7 325.4 Q1491.2 314.8 1466.7 293.7" stroke="#f8e060" stroke-width="1.1" fill="none" opacity="0.65"/><path d="M1515.7 325.4 Q1539.0 314.8 1562.2 293.7" stroke="#f8e060" stroke-width="1.1" fill="none" opacity="0.65"/><path d="M1515.5 341.2 Q1491.1 330.7 1466.7 309.6" stroke="#f8e060" stroke-width="1.1" fill="none" opacity="0.65"/><path d="M1515.5 341.2 Q1538.9 330.7 1562.2 309.6" stroke="#f8e060" stroke-width="1.1" fill="none" opacity="0.65"/><path d="M1515.3 357.1 Q1491.0 346.5 1466.7 325.4" stroke="#f8e060" stroke-width="1.1" fill="none" opacity="0.65"/><path d="M1515.3 357.1 Q1538.8 346.5 1562.2 325.4" stroke="#f8e060" stroke-width="1.1" fill="none" opacity="0.65"/><path d="M1515.2 372.9 Q1490.9 362.4 1466.7 341.2" stroke="#f8e060" stroke-width="1.1" fill="none" opacity="0.65"/><path d="M1515.2 372.9 Q1538.7 362.4 1562.2 341.2" stroke="#f8e060" stroke-width="1.1" fill="none" opacity="0.65"/><path d="M1516 299 L1515 387" stroke="#f8e060" stroke-width="1.5" opacity="0.95"/><path d="M1515.5 347.4 L1515 387" stroke="#3cc82a" stroke-width="1.5" stroke-dasharray="3 1.5"/></g><radialGradient id="g2" gradientUnits="userSpaceOnUse" cx="1505" cy="485" r="77"><stop offset="0" stop-color="#f08a1e"/><stop offset="0.7" stop-color="#f3a82a"/><stop offset="1" stop-color="#e8d838"/></radialGradient><clipPath id="c2"><path d="M1499.0 429.5 C1507.8 429.7 1517.2 430.2 1525.0 433.0 C1532.8 435.8 1540.3 440.7 1546.0 446.0 C1551.7 451.3 1556.0 458.0 1559.0 465.0 C1562.0 472.0 1563.8 480.2 1564.0 488.0 C1564.2 495.8 1563.0 505.3 1560.0 512.0 C1557.0 518.7 1552.7 523.3 1546.0 528.0 C1539.3 532.7 1528.7 536.7 1520.0 540.0 C1511.3 543.3 1502.0 547.8 1493.7 547.6 C1485.4 547.4 1478.0 542.6 1470.0 539.0 C1462.0 535.4 1452.3 531.5 1446.0 526.0 C1439.7 520.5 1434.7 513.7 1432.0 506.0 C1429.3 498.3 1429.7 487.8 1430.0 480.0 C1430.3 472.2 1430.7 465.5 1434.0 459.0 C1437.3 452.5 1443.7 445.5 1450.0 441.0 C1456.3 436.5 1463.8 433.9 1472.0 432.0 C1480.2 430.1 1490.2 429.3 1499.0 429.5 Z"/></clipPath><path d="M1499.0 429.5 C1507.8 429.7 1517.2 430.2 1525.0 433.0 C1532.8 435.8 1540.3 440.7 1546.0 446.0 C1551.7 451.3 1556.0 458.0 1559.0 465.0 C1562.0 472.0 1563.8 480.2 1564.0 488.0 C1564.2 495.8 1563.0 505.3 1560.0 512.0 C1557.0 518.7 1552.7 523.3 1546.0 528.0 C1539.3 532.7 1528.7 536.7 1520.0 540.0 C1511.3 543.3 1502.0 547.8 1493.7 547.6 C1485.4 547.4 1478.0 542.6 1470.0 539.0 C1462.0 535.4 1452.3 531.5 1446.0 526.0 C1439.7 520.5 1434.7 513.7 1432.0 506.0 C1429.3 498.3 1429.7 487.8 1430.0 480.0 C1430.3 472.2 1430.7 465.5 1434.0 459.0 C1437.3 452.5 1443.7 445.5 1450.0 441.0 C1456.3 436.5 1463.8 433.9 1472.0 432.0 C1480.2 430.1 1490.2 429.3 1499.0 429.5 Z" fill="url(#g2)" stroke="#62e02a" stroke-width="1.2"/><g clip-path="url(#c2)"><path d="M1498.4 444.8 Q1463.0 431.0 1427.6 403.4" stroke="#f6d450" stroke-width="1.1" fill="none" opacity="0.7"/><path d="M1498.4 444.8 Q1532.3 431.0 1566.2 403.4" stroke="#f6d450" stroke-width="1.1" fill="none" opacity="0.7"/><path d="M1497.7 461.4 Q1462.7 447.6 1427.7 420.0" stroke="#f6d450" stroke-width="1.1" fill="none" opacity="0.7"/><path d="M1497.7 461.4 Q1532.0 447.6 1566.3 420.0" stroke="#f6d450" stroke-width="1.1" fill="none" opacity="0.7"/><path d="M1497.0 477.9 Q1462.3 464.1 1427.7 436.5" stroke="#f6d450" stroke-width="1.1" fill="none" opacity="0.7"/><path d="M1497.0 477.9 Q1531.6 464.1 1566.3 436.5" stroke="#f6d450" stroke-width="1.1" fill="none" opacity="0.7"/><path d="M1496.2 494.5 Q1462.0 480.7 1427.7 453.1" stroke="#f6d450" stroke-width="1.1" fill="none" opacity="0.7"/><path d="M1496.2 494.5 Q1531.3 480.7 1566.3 453.1" stroke="#f6d450" stroke-width="1.1" fill="none" opacity="0.7"/><path d="M1495.5 511.0 Q1461.6 497.2 1427.8 469.6" stroke="#f6d450" stroke-width="1.1" fill="none" opacity="0.7"/><path d="M1495.5 511.0 Q1530.9 497.2 1566.4 469.6" stroke="#f6d450" stroke-width="1.1" fill="none" opacity="0.7"/><path d="M1494.8 527.6 Q1461.3 513.8 1427.8 486.2" stroke="#f6d450" stroke-width="1.1" fill="none" opacity="0.7"/><path d="M1494.8 527.6 Q1530.6 513.8 1566.4 486.2" stroke="#f6d450" stroke-width="1.1" fill="none" opacity="0.7"/><path d="M1499 431 L1494 546" stroke="#f6d450" stroke-width="1.5" opacity="0.95"/><path d="M1496.2 494.2 L1494 546" stroke="#3cc82a" stroke-width="1.5" stroke-dasharray="3 1.5"/></g><radialGradient id="g3" gradientUnits="userSpaceOnUse" cx="1367" cy="508" r="43"><stop offset="0" stop-color="#e8e438"/><stop offset="0.7" stop-color="#c8e430"/><stop offset="1" stop-color="#72e020"/></radialGradient><clipPath id="c3"><path d="M1366.0 473.0 C1370.7 472.8 1375.5 471.8 1380.0 473.0 C1384.5 474.2 1389.7 476.8 1393.0 480.0 C1396.3 483.2 1398.5 487.7 1400.0 492.0 C1401.5 496.3 1401.9 501.0 1401.7 506.0 C1401.5 511.0 1401.0 517.3 1399.0 522.0 C1397.0 526.7 1393.8 531.2 1390.0 534.0 C1386.2 536.8 1380.2 538.0 1376.0 539.0 C1371.8 540.0 1369.0 540.0 1365.0 540.0 C1361.0 540.0 1356.2 540.0 1352.0 539.0 C1347.8 538.0 1343.2 536.8 1340.0 534.0 C1336.8 531.2 1334.3 526.5 1333.0 522.0 C1331.7 517.5 1331.8 512.2 1332.0 507.0 C1332.2 501.8 1332.5 495.5 1334.0 491.0 C1335.5 486.5 1338.0 482.8 1341.0 480.0 C1344.0 477.2 1347.8 475.2 1352.0 474.0 C1356.2 472.8 1361.3 473.2 1366.0 473.0 Z"/></clipPath><path d="M1366.0 473.0 C1370.7 472.8 1375.5 471.8 1380.0 473.0 C1384.5 474.2 1389.7 476.8 1393.0 480.0 C1396.3 483.2 1398.5 487.7 1400.0 492.0 C1401.5 496.3 1401.9 501.0 1401.7 506.0 C1401.5 511.0 1401.0 517.3 1399.0 522.0 C1397.0 526.7 1393.8 531.2 1390.0 534.0 C1386.2 536.8 1380.2 538.0 1376.0 539.0 C1371.8 540.0 1369.0 540.0 1365.0 540.0 C1361.0 540.0 1356.2 540.0 1352.0 539.0 C1347.8 538.0 1343.2 536.8 1340.0 534.0 C1336.8 531.2 1334.3 526.5 1333.0 522.0 C1331.7 517.5 1331.8 512.2 1332.0 507.0 C1332.2 501.8 1332.5 495.5 1334.0 491.0 C1335.5 486.5 1338.0 482.8 1341.0 480.0 C1344.0 477.2 1347.8 475.2 1352.0 474.0 C1356.2 472.8 1361.3 473.2 1366.0 473.0 Z" fill="url(#g3)" stroke="#62e02a" stroke-width="1.2"/><g clip-path="url(#c3)"><path d="M1365.9 481.8 Q1348.6 474.0 1331.4 458.4" stroke="#eef068" stroke-width="1.1" fill="none" opacity="0.55"/><path d="M1365.9 481.8 Q1383.8 474.0 1401.7 458.4" stroke="#eef068" stroke-width="1.1" fill="none" opacity="0.55"/><path d="M1365.6 497.4 Q1348.5 489.6 1331.4 474.0" stroke="#eef068" stroke-width="1.1" fill="none" opacity="0.55"/><path d="M1365.6 497.4 Q1383.7 489.6 1401.7 474.0" stroke="#eef068" stroke-width="1.1" fill="none" opacity="0.55"/><path d="M1365.4 513.0 Q1348.4 505.2 1331.4 489.6" stroke="#eef068" stroke-width="1.1" fill="none" opacity="0.55"/><path d="M1365.4 513.0 Q1383.6 505.2 1401.7 489.6" stroke="#eef068" stroke-width="1.1" fill="none" opacity="0.55"/><path d="M1365.2 528.6 Q1348.3 520.8 1331.4 505.2" stroke="#eef068" stroke-width="1.1" fill="none" opacity="0.55"/><path d="M1365.2 528.6 Q1383.5 520.8 1401.7 505.2" stroke="#eef068" stroke-width="1.1" fill="none" opacity="0.55"/><path d="M1366 474 L1365 539" stroke="#eef068" stroke-width="1.5" opacity="0.95"/><path d="M1365.5 509.8 L1365 539" stroke="#3cc82a" stroke-width="1.5" stroke-dasharray="3 1.5"/></g></svg>
<div class="t" style="left:1354.0px;top:274.2px;width:60px;text-align:center;font-size:10.5px;line-height:14.5px;font-family:'Liberation Sans', sans-serif;color:#fff;">area0</div>
<div class="t" style="left:1490.0px;top:287.2px;width:60px;text-align:center;font-size:10.5px;line-height:14.5px;font-family:'Liberation Sans', sans-serif;color:#fff;">area1</div>
<div class="t" style="left:1471.0px;top:417.2px;width:60px;text-align:center;font-size:10.5px;line-height:14.5px;font-family:'Liberation Sans', sans-serif;color:#fff;">area2</div>
<div class="t" style="left:1355.0px;top:459.8px;width:60px;text-align:center;font-size:10.5px;line-height:14.5px;font-family:'Liberation Sans', sans-serif;color:#fff;">area3</div>
<div style="left:1639px;top:238.5px;width:48px;height:18.5px;background:#fff;border:1px solid #7a7a7a;box-sizing:border-box;"></div>
<div class="t" style="left:1649px;top:239.8px;font-size:12px;line-height:16px;font-family:'Liberation Sans', sans-serif;color:#111;">1353</div>
<div style="left:1644px;top:266px;width:4px;height:490px;background:#e4e4e4;"></div>
<div style="left:1661px;top:266px;width:3px;height:490px;background:#e4e4e4;"></div>
<div style="left:1656px;top:262.5px;width:14px;height:10px;background:#0f78d7;"></div>
<div style="left:1637.5px;top:747px;width:15.5px;height:9px;background:#0f78d7;"></div>
<div style="left:1672px;top:264px;width:16px;height:491px;border:1px solid #bfe0c0;box-sizing:border-box;background:linear-gradient(180deg,#ee2a20 0%,#f57a22 30%,#f7c22a 50%,#e8f22a 65%,#7de82a 85%,#2ee82e 100%);"></div>
<div style="left:1697px;top:163px;width:602px;height:596px;background:#fff;border:1px solid #d9d9d9;box-sizing:border-box;"></div>
<div style="left:1697px;top:147px;width:71px;height:17.5px;background:#fff;border:1px solid #d9d9d9;border-bottom:none;box-sizing:border-box;z-index:2;"></div>
<div class="t" style="left:1687.0px;top:148.2px;width:91px;text-align:center;font-size:12px;line-height:16px;font-family:'Liberation Sans', sans-serif;color:#333;z-index:3;">选区分析</div>
<div style="left:1768px;top:149px;width:69px;height:14.5px;background:#f0f0f0;border:1px solid #d9d9d9;border-bottom:none;box-sizing:border-box;"></div>
<div class="t" style="left:1758.0px;top:149.2px;width:89px;text-align:center;font-size:12px;line-height:16px;font-family:'Liberation Sans', sans-serif;color:#333;z-index:3;">路径分析</div>
<div style="left:1700px;top:187px;width:394px;height:322px;background:#fff;border:1px solid #d9d9d9;box-sizing:border-box;"></div>
<div style="left:1700.5px;top:168px;width:79px;height:20px;background:#fff;border:1px solid #d9d9d9;border-bottom:none;box-sizing:border-box;z-index:2;"></div>
<div class="t" style="left:1690.5px;top:169.5px;width:99px;text-align:center;font-size:14px;line-height:18px;font-family:'Liberation Serif', serif;color:#333;z-index:3;">光谱曲线</div>
<div style="left:1703px;top:194px;width:71.5px;height:18px;background:#e1e1e1;border:1px solid #adadad;box-sizing:border-box;"></div>
<div class="t" style="left:1693.0px;top:194.0px;width:91.5px;text-align:center;font-size:14px;line-height:18px;font-family:'Liberation Serif', serif;color:#333;">手动区分析</div>
<div style="left:1785px;top:194px;width:72px;height:18px;background:#e1e1e1;border:1px solid #adadad;box-sizing:border-box;"></div>
<div class="t" style="left:1775.0px;top:194.0px;width:92px;text-align:center;font-size:14px;line-height:18px;font-family:'Liberation Serif', serif;color:#333;">自动区分析</div>
<div style="left:1864px;top:193.5px;width:87px;height:19px;background:#e5e5e5;border:1px solid #adadad;box-sizing:border-box;"></div>
<div class="t" style="left:1868px;top:194.0px;font-size:14px;line-height:18px;font-family:'Liberation Serif', serif;color:#333;">加权平滑</div>
<svg style="left:1934px;top:197.0px;" width="12" height="12"><path transform="translate(6,6)" d="M-4 -2.0 L0 2.0 L4 -2.0" stroke="#444" stroke-width="1.1" fill="none"/></svg>
<div style="left:1956.5px;top:193.5px;width:87px;height:19px;background:#e5e5e5;border:1px solid #adadad;box-sizing:border-box;"></div>
<div class="t" style="left:1960.5px;top:194.0px;font-size:14px;line-height:18px;font-family:'Liberation Serif', serif;color:#333;">0nm融合</div>
<svg style="left:2026.5px;top:197.0px;" width="12" height="12"><path transform="translate(6,6)" d="M-4 -2.0 L0 2.0 L4 -2.0" stroke="#444" stroke-width="1.1" fill="none"/></svg>
<div style="left:2048px;top:193.5px;width:42.5px;height:19px;background:#e1e1e1;border:1px solid #adadad;box-sizing:border-box;"></div>
<div class="t" style="left:2038.0px;top:194.0px;width:62.5px;text-align:center;font-size:14px;line-height:18px;font-family:'Liberation Serif', serif;color:#333;">导出</div>
<svg style="left:1700px;top:187px;" width="394" height="322" viewBox="1700 187 394 322"><rect x="1730.5" y="215" width="306.5" height="260" fill="#dedede"/><path d="M1731.5 475 L1731.5 216 L2037 216" stroke="#a8a8a8" stroke-width="2" fill="none"/><line x1="1732.5" y1="472.0" x2="2037" y2="472.0" stroke="#555" stroke-width="1" stroke-dasharray="1 2"/><line x1="1732.5" y1="449.1" x2="2037" y2="449.1" stroke="#555" stroke-width="1" stroke-dasharray="1 2"/><line x1="1732.5" y1="426.3" x2="2037" y2="426.3" stroke="#555" stroke-width="1" stroke-dasharray="1 2"/><line x1="1732.5" y1="403.4" x2="2037" y2="403.4" stroke="#555" stroke-width="1" stroke-dasharray="1 2"/><line x1="1732.5" y1="380.6" x2="2037" y2="380.6" stroke="#555" stroke-width="1" stroke-dasharray="1 2"/><line x1="1732.5" y1="357.7" x2="2037" y2="357.7" stroke="#555" stroke-width="1" stroke-dasharray="1 2"/><line x1="1732.5" y1="334.8" x2="2037" y2="334.8" stroke="#555" stroke-width="1" stroke-dasharray="1 2"/><line x1="1732.5" y1="312.0" x2="2037" y2="312.0" stroke="#555" stroke-width="1" stroke-dasharray="1 2"/><line x1="1732.5" y1="289.1" x2="2037" y2="289.1" stroke="#555" stroke-width="1" stroke-dasharray="1 2"/><line x1="1732.5" y1="266.3" x2="2037" y2="266.3" stroke="#555" stroke-width="1" stroke-dasharray="1 2"/><line x1="1732.5" y1="243.4" x2="2037" y2="243.4" stroke="#555" stroke-width="1" stroke-dasharray="1 2"/><line x1="1732.5" y1="220.5" x2="2037" y2="220.5" stroke="#555" stroke-width="1" stroke-dasharray="1 2"/><line x1="1735.3" y1="217" x2="1735.3" y2="475" stroke="#555" stroke-width="1" stroke-dasharray="1 2"/><line x1="1830.8" y1="217" x2="1830.8" y2="475" stroke="#555" stroke-width="1" stroke-dasharray="1 2"/><line x1="1926.3" y1="217" x2="1926.3" y2="475" stroke="#555" stroke-width="1" stroke-dasharray="1 2"/><line x1="2021.2" y1="217" x2="2021.2" y2="475" stroke="#555" stroke-width="1" stroke-dasharray="1 2"/><line x1="1727.5" y1="216" x2="1727.5" y2="476" stroke="#333" stroke-width="1.5"/><line x1="1719.5" y1="472.0" x2="1727.5" y2="472.0" stroke="#333" stroke-width="1"/><line x1="1723.5" y1="466.3" x2="1727.5" y2="466.3" stroke="#333" stroke-width="1"/><line x1="1723.5" y1="460.6" x2="1727.5" y2="460.6" stroke="#333" stroke-width="1"/><line x1="1723.5" y1="454.9" x2="1727.5" y2="454.9" stroke="#333" stroke-width="1"/><line x1="1719.5" y1="449.1" x2="1727.5" y2="449.1" stroke="#333" stroke-width="1"/><line x1="1723.5" y1="443.4" x2="1727.5" y2="443.4" stroke="#333" stroke-width="1"/><line x1="1723.5" y1="437.7" x2="1727.5" y2="437.7" stroke="#333" stroke-width="1"/><line x1="1723.5" y1="432.0" x2="1727.5" y2="432.0" stroke="#333" stroke-width="1"/><line x1="1719.5" y1="426.3" x2="1727.5" y2="426.3" stroke="#333" stroke-width="1"/><line x1="1723.5" y1="420.6" x2="1727.5" y2="420.6" stroke="#333" stroke-width="1"/><line x1="1723.5" y1="414.9" x2="1727.5" y2="414.9" stroke="#333" stroke-width="1"/><line x1="1723.5" y1="409.1" x2="1727.5" y2="409.1" stroke="#333" stroke-width="1"/><line x1="1719.5" y1="403.4" x2="1727.5" y2="403.4" stroke="#333" stroke-width="1"/><line x1="1723.5" y1="397.7" x2="1727.5" y2="397.7" stroke="#333" stroke-width="1"/><line x1="1723.5" y1="392.0" x2="1727.5" y2="392.0" stroke="#333" stroke-width="1"/><line x1="1723.5" y1="386.3" x2="1727.5" y2="386.3" stroke="#333" stroke-width="1"/><line x1="1719.5" y1="380.6" x2="1727.5" y2="380.6" stroke="#333" stroke-width="1"/><line x1="1723.5" y1="374.8" x2="1727.5" y2="374.8" stroke="#333" stroke-width="1"/><line x1="1723.5" y1="369.1" x2="1727.5" y2="369.1" stroke="#333" stroke-width="1"/><line x1="1723.5" y1="363.4" x2="1727.5" y2="363.4" stroke="#333" stroke-width="1"/><line x1="1719.5" y1="357.7" x2="1727.5" y2="357.7" stroke="#333" stroke-width="1"/><line x1="1723.5" y1="352.0" x2="1727.5" y2="352.0" stroke="#333" stroke-width="1"/><line x1="1723.5" y1="346.3" x2="1727.5" y2="346.3" stroke="#333" stroke-width="1"/><line x1="1723.5" y1="340.6" x2="1727.5" y2="340.6" stroke="#333" stroke-width="1"/><line x1="1719.5" y1="334.8" x2="1727.5" y2="334.8" stroke="#333" stroke-width="1"/><line x1="1723.5" y1="329.1" x2="1727.5" y2="329.1" stroke="#333" stroke-width="1"/><line x1="1723.5" y1="323.4" x2="1727.5" y2="323.4" stroke="#333" stroke-width="1"/><line x1="1723.5" y1="317.7" x2="1727.5" y2="317.7" stroke="#333" stroke-width="1"/><line x1="1719.5" y1="312.0" x2="1727.5" y2="312.0" stroke="#333" stroke-width="1"/><line x1="1723.5" y1="306.3" x2="1727.5" y2="306.3" stroke="#333" stroke-width="1"/><line x1="1723.5" y1="300.6" x2="1727.5" y2="300.6" stroke="#333" stroke-width="1"/><line x1="1723.5" y1="294.8" x2="1727.5" y2="294.8" stroke="#333" stroke-width="1"/><line x1="1719.5" y1="289.1" x2="1727.5" y2="289.1" stroke="#333" stroke-width="1"/><line x1="1723.5" y1="283.4" x2="1727.5" y2="283.4" stroke="#333" stroke-width="1"/><line x1="1723.5" y1="277.7" x2="1727.5" y2="277.7" stroke="#333" stroke-width="1"/><line x1="1723.5" y1="272.0" x2="1727.5" y2="272.0" stroke="#333" stroke-width="1"/><line x1="1719.5" y1="266.3" x2="1727.5" y2="266.3" stroke="#333" stroke-width="1"/><line x1="1723.5" y1="260.5" x2="1727.5" y2="260.5" stroke="#333" stroke-width="1"/><line x1="1723.5" y1="254.8" x2="1727.5" y2="254.8" stroke="#333" stroke-width="1"/><line x1="1723.5" y1="249.1" x2="1727.5" y2="249.1" stroke="#333" stroke-width="1"/><line x1="1719.5" y1="243.4" x2="1727.5" y2="243.4" stroke="#333" stroke-width="1"/><line x1="1723.5" y1="237.7" x2="1727.5" y2="237.7" stroke="#333" stroke-width="1"/><line x1="1723.5" y1="232.0" x2="1727.5" y2="232.0" stroke="#333" stroke-width="1"/><line x1="1723.5" y1="226.3" x2="1727.5" y2="226.3" stroke="#333" stroke-width="1"/><line x1="1719.5" y1="220.5" x2="1727.5" y2="220.5" stroke="#333" stroke-width="1"/><line x1="1734" y1="476.5" x2="2022" y2="476.5" stroke="#333" stroke-width="1.5"/><line x1="1735.3" y1="476.5" x2="1735.3" y2="481.5" stroke="#333" stroke-width="1"/><line x1="1759.1" y1="476.5" x2="1759.1" y2="480.0" stroke="#333" stroke-width="1"/><line x1="1783.0" y1="476.5" x2="1783.0" y2="480.0" stroke="#333" stroke-width="1"/><line x1="1806.8" y1="476.5" x2="1806.8" y2="480.0" stroke="#333" stroke-width="1"/><line x1="1830.6" y1="476.5" x2="1830.6" y2="481.5" stroke="#333" stroke-width="1"/><line x1="1854.4" y1="476.5" x2="1854.4" y2="480.0" stroke="#333" stroke-width="1"/><line x1="1878.2" y1="476.5" x2="1878.2" y2="480.0" stroke="#333" stroke-width="1"/><line x1="1902.1" y1="476.5" x2="1902.1" y2="480.0" stroke="#333" stroke-width="1"/><line x1="1925.9" y1="476.5" x2="1925.9" y2="481.5" stroke="#333" stroke-width="1"/><line x1="1949.7" y1="476.5" x2="1949.7" y2="480.0" stroke="#333" stroke-width="1"/><line x1="1973.5" y1="476.5" x2="1973.5" y2="480.0" stroke="#333" stroke-width="1"/><line x1="1997.4" y1="476.5" x2="1997.4" y2="480.0" stroke="#333" stroke-width="1"/><line x1="2021.2" y1="476.5" x2="2021.2" y2="481.5" stroke="#333" stroke-width="1"/><path d="M1735.2 428.1 C1736.3 430.8 1739.1 438.8 1741.9 444.2 C1744.8 449.6 1749.1 457.6 1752.2 460.3 C1755.3 463.0 1757.7 460.3 1760.4 460.3 C1763.2 460.3 1766.0 460.3 1768.7 460.3 C1771.5 460.3 1773.9 461.3 1777.0 460.3 C1780.1 459.3 1784.0 455.4 1787.3 454.4 C1790.5 453.5 1793.4 454.4 1796.5 454.4 C1799.6 454.4 1802.7 454.4 1805.8 454.4 C1808.9 454.4 1812.0 453.5 1815.0 454.4 C1818.0 455.4 1821.0 459.3 1823.8 460.3 C1826.6 461.3 1829.3 460.3 1832.1 460.3 C1834.8 460.3 1837.6 460.3 1840.4 460.3 C1843.1 460.3 1845.8 462.5 1848.7 460.3 C1851.5 458.1 1855.2 453.2 1857.4 447.1 C1859.6 441.0 1860.6 436.4 1861.8 423.7 C1863.0 411.1 1863.8 388.7 1864.7 371.1 C1865.7 353.6 1866.6 334.1 1867.7 318.5 C1868.7 302.9 1870.0 281.0 1871.2 277.5 C1872.4 274.1 1873.6 288.8 1875.0 298.0 C1876.3 307.3 1878.0 326.0 1879.4 333.1 C1880.7 340.2 1881.7 341.4 1883.2 340.4 C1884.6 339.4 1886.3 331.2 1888.1 327.3 C1889.9 323.4 1892.0 315.6 1894.0 317.0 C1895.9 318.5 1897.9 326.0 1899.8 336.0 C1901.8 346.0 1903.5 361.4 1905.7 377.0 C1907.9 392.6 1910.3 417.4 1913.0 429.6 C1915.7 441.8 1919.3 445.7 1921.8 450.1 C1924.2 454.4 1926.1 454.2 1927.6 455.9 C1929.1 457.6 1930.0 459.6 1930.5 460.3" stroke="#e83a22" stroke-width="2.4" fill="none" stroke-linejoin="round"/><path d="M1735.2 426.7 C1736.6 430.1 1741.1 442.5 1743.4 447.1 C1745.7 451.8 1746.9 453.2 1749.2 454.4 C1751.6 455.7 1754.6 454.4 1757.3 454.4 C1760.0 454.4 1763.0 453.5 1765.3 454.4 C1767.6 455.4 1769.0 460.0 1771.2 460.3 C1773.4 460.5 1776.5 456.9 1778.5 455.9 C1780.4 454.9 1780.6 454.7 1782.9 454.4 C1785.1 454.2 1789.0 454.4 1792.0 454.4 C1795.0 454.4 1798.1 454.4 1801.1 454.4 C1804.2 454.4 1807.2 454.4 1810.3 454.4 C1813.3 454.4 1816.7 453.5 1819.4 454.4 C1822.2 455.4 1823.7 459.4 1826.7 460.3 C1829.8 461.1 1834.0 459.8 1837.7 459.6 C1841.3 459.3 1845.4 461.4 1848.7 458.8 C1851.9 456.3 1855.2 451.0 1857.4 444.2 C1859.6 437.4 1860.7 426.7 1861.8 417.9 C1862.9 409.1 1862.9 403.3 1863.9 391.6 C1864.8 379.9 1866.4 361.1 1867.7 347.7 C1868.9 334.3 1870.0 313.6 1871.2 311.2 C1872.4 308.7 1873.2 324.3 1875.0 333.1 C1876.7 341.9 1879.5 360.4 1881.7 363.8 C1883.9 367.2 1886.1 356.5 1888.1 353.6 C1890.2 350.6 1892.0 345.3 1894.0 346.3 C1895.9 347.2 1897.6 349.4 1899.8 359.4 C1902.0 369.4 1904.7 392.6 1907.1 406.2 C1909.6 419.8 1911.5 433.5 1914.4 441.3 C1917.4 449.1 1921.3 450.5 1924.7 453.0 C1928.1 455.4 1932.7 454.7 1934.9 455.9 C1937.1 457.1 1937.3 459.6 1937.8 460.3" stroke="#3c8fe0" stroke-width="2.4" fill="none" stroke-linejoin="round"/><path d="M1735.2 432.5 C1736.6 435.4 1741.1 445.4 1743.4 450.1 C1745.7 454.7 1746.3 458.6 1749.2 460.3 C1752.2 462.0 1757.0 460.3 1760.9 460.3 C1764.8 460.3 1769.2 460.3 1772.6 460.3 C1776.0 460.3 1778.5 461.0 1781.4 460.3 C1784.3 459.6 1787.1 456.7 1790.2 455.9 C1793.3 455.1 1796.7 455.6 1799.9 455.4 C1803.2 455.3 1806.4 455.1 1809.7 454.9 C1812.9 454.8 1816.6 453.6 1819.4 454.4 C1822.3 455.3 1823.7 459.4 1826.7 460.3 C1829.8 461.1 1834.0 459.8 1837.7 459.6 C1841.3 459.3 1845.4 460.9 1848.7 458.8 C1851.9 456.8 1855.2 453.0 1857.4 447.1 C1859.6 441.3 1860.7 431.5 1861.8 423.7 C1862.9 415.9 1862.9 410.6 1863.9 400.4 C1864.8 390.1 1866.4 374.0 1867.7 362.3 C1868.9 350.6 1870.0 332.6 1871.2 330.2 C1872.4 327.7 1873.2 340.7 1875.0 347.7 C1876.7 354.8 1879.5 370.1 1881.7 372.6 C1883.9 375.0 1886.1 365.3 1888.1 362.3 C1890.2 359.4 1892.0 354.1 1894.0 355.0 C1895.9 356.0 1897.6 358.7 1899.8 368.2 C1902.0 377.7 1904.7 399.4 1907.1 412.0 C1909.6 424.7 1911.5 436.9 1914.4 444.2 C1917.4 451.5 1922.0 453.2 1924.7 455.9 C1927.4 458.6 1929.6 459.6 1930.5 460.3" stroke="#35b34a" stroke-width="2.4" fill="none" stroke-linejoin="round"/><path d="M1735.2 428.1 C1736.3 430.8 1739.1 438.8 1741.9 444.2 C1744.8 449.6 1749.1 457.6 1752.2 460.3 C1755.3 463.0 1757.7 460.3 1760.4 460.3 C1763.2 460.3 1766.0 460.3 1768.7 460.3 C1771.5 460.3 1773.9 461.3 1777.0 460.3 C1780.1 459.3 1784.0 455.4 1787.3 454.4 C1790.5 453.5 1793.4 454.4 1796.5 454.4 C1799.6 454.4 1802.7 454.4 1805.8 454.4 C1808.9 454.4 1812.0 453.5 1815.0 454.4 C1818.0 455.4 1820.9 459.3 1823.8 460.3 C1826.7 461.3 1829.6 460.3 1832.6 460.3 C1835.5 460.3 1838.4 460.3 1841.3 460.3 C1844.3 460.3 1847.2 461.5 1850.1 460.3 C1853.0 459.1 1856.7 457.1 1858.9 453.0 C1861.1 448.8 1862.1 443.2 1863.3 435.4 C1864.5 427.6 1865.2 415.0 1866.2 406.2 C1867.2 397.4 1868.2 388.2 1869.1 382.8 C1870.0 377.4 1870.2 373.1 1871.5 374.0 C1872.7 375.0 1874.6 384.3 1876.4 388.7 C1878.2 393.0 1880.3 399.9 1882.3 400.4 C1884.2 400.8 1886.1 394.5 1888.1 391.6 C1890.2 388.7 1892.4 382.3 1894.6 382.8 C1896.8 383.3 1899.2 387.7 1901.3 394.5 C1903.4 401.3 1904.9 415.0 1907.1 423.7 C1909.3 432.5 1911.0 441.0 1914.4 447.1 C1917.9 453.2 1923.6 458.1 1927.6 460.3 C1931.6 462.5 1934.8 460.3 1938.4 460.3 C1942.0 460.3 1945.6 460.3 1949.2 460.3 C1952.8 460.3 1956.4 460.3 1959.9 460.3 C1963.5 460.3 1967.1 460.3 1970.7 460.3 C1974.3 460.3 1977.9 460.3 1981.5 460.3 C1985.1 460.3 1988.7 460.3 1992.3 460.3 C1995.9 460.3 1999.5 460.3 2003.1 460.3 C2006.7 460.3 2010.6 460.9 2013.9 460.3 C2017.1 459.7 2021.2 457.1 2022.6 456.5" stroke="#000" stroke-width="2.6" fill="none" stroke-linejoin="round"/><line x1="2044" y1="223.7" x2="2050" y2="223.7" stroke="#e83a22" stroke-width="2.5"/><line x1="2044" y1="246.0" x2="2050" y2="246.0" stroke="#35b34a" stroke-width="2.5"/><line x1="2044" y1="268.3" x2="2050" y2="268.3" stroke="#3c8fe0" stroke-width="2.5"/><line x1="2044" y1="290.6" x2="2050" y2="290.6" stroke="#000" stroke-width="2.5"/></svg>
<div class="t" style="left:2054.5px;top:215.8px;font-size:13.5px;line-height:17.5px;font-family:'Liberation Mono', monospace;letter-spacing:-1.01px;color:#222;">Area0</div>
<div class="t" style="left:2054.5px;top:238.1px;font-size:13.5px;line-height:17.5px;font-family:'Liberation Mono', monospace;letter-spacing:-1.01px;color:#222;">Area1</div>
<div class="t" style="left:2054.5px;top:260.4px;font-size:13.5px;line-height:17.5px;font-family:'Liberation Mono', monospace;letter-spacing:-1.01px;color:#222;">Area2</div>
<div class="t" style="left:2054.5px;top:282.7px;font-size:13.5px;line-height:17.5px;font-family:'Liberation Mono', monospace;letter-spacing:-1.01px;color:#222;">Area3</div>
<div class="t" style="left:1677.5px;top:464.1px;width:40px;text-align:right;font-size:13.5px;line-height:17.5px;font-family:'Liberation Mono', monospace;letter-spacing:-1.01px;color:#222;">0</div>
<div class="t" style="left:1677.5px;top:441.2px;width:40px;text-align:right;font-size:13.5px;line-height:17.5px;font-family:'Liberation Mono', monospace;letter-spacing:-1.01px;color:#222;">4</div>
<div class="t" style="left:1677.5px;top:418.3px;width:40px;text-align:right;font-size:13.5px;line-height:17.5px;font-family:'Liberation Mono', monospace;letter-spacing:-1.01px;color:#222;">8</div>
<div class="t" style="left:1677.5px;top:395.5px;width:40px;text-align:right;font-size:13.5px;line-height:17.5px;font-family:'Liberation Mono', monospace;letter-spacing:-1.01px;color:#222;">12</div>
<div class="t" style="left:1677.5px;top:372.6px;width:40px;text-align:right;font-size:13.5px;line-height:17.5px;font-family:'Liberation Mono', monospace;letter-spacing:-1.01px;color:#222;">16</div>
<div class="t" style="left:1677.5px;top:349.8px;width:40px;text-align:right;font-size:13.5px;line-height:17.5px;font-family:'Liberation Mono', monospace;letter-spacing:-1.01px;color:#222;">20</div>
<div class="t" style="left:1677.5px;top:326.9px;width:40px;text-align:right;font-size:13.5px;line-height:17.5px;font-family:'Liberation Mono', monospace;letter-spacing:-1.01px;color:#222;">24</div>
<div class="t" style="left:1677.5px;top:304.0px;width:40px;text-align:right;font-size:13.5px;line-height:17.5px;font-family:'Liberation Mono', monospace;letter-spacing:-1.01px;color:#222;">28</div>
<div class="t" style="left:1677.5px;top:281.2px;width:40px;text-align:right;font-size:13.5px;line-height:17.5px;font-family:'Liberation Mono', monospace;letter-spacing:-1.01px;color:#222;">32</div>
<div class="t" style="left:1677.5px;top:258.3px;width:40px;text-align:right;font-size:13.5px;line-height:17.5px;font-family:'Liberation Mono', monospace;letter-spacing:-1.01px;color:#222;">36</div>
<div class="t" style="left:1677.5px;top:235.5px;width:40px;text-align:right;font-size:13.5px;line-height:17.5px;font-family:'Liberation Mono', monospace;letter-spacing:-1.01px;color:#222;">40</div>
<div class="t" style="left:1677.5px;top:212.6px;width:40px;text-align:right;font-size:13.5px;line-height:17.5px;font-family:'Liberation Mono', monospace;letter-spacing:-1.01px;color:#222;">44</div>
<div class="t" style="left:1705.3px;top:485.1px;width:60px;text-align:center;font-size:13.5px;line-height:17.5px;font-family:'Liberation Mono', monospace;letter-spacing:-1.01px;color:#222;">400</div>
<div class="t" style="left:1800.8px;top:485.1px;width:60px;text-align:center;font-size:13.5px;line-height:17.5px;font-family:'Liberation Mono', monospace;letter-spacing:-1.01px;color:#222;">600</div>
<div class="t" style="left:1896.3px;top:485.1px;width:60px;text-align:center;font-size:13.5px;line-height:17.5px;font-family:'Liberation Mono', monospace;letter-spacing:-1.01px;color:#222;">800</div>
<div class="t" style="left:1991.2px;top:485.1px;width:60px;text-align:center;font-size:13.5px;line-height:17.5px;font-family:'Liberation Mono', monospace;letter-spacing:-1.01px;color:#222;">1,000</div>
<div style="left:2100px;top:186px;width:195px;height:150px;background:#fff;border:1px solid #d9d9d9;box-sizing:border-box;"></div>
<div style="left:2100px;top:171px;width:52px;height:15px;background:#f0f0f0;border:1px solid #d9d9d9;border-bottom:none;box-sizing:border-box;"></div>
<div class="t" style="left:2090.0px;top:171.5px;width:72px;text-align:center;font-size:12px;line-height:16px;font-family:'Liberation Sans', sans-serif;color:#333;z-index:3;">区域1</div>
<div style="left:2152px;top:171px;width:29px;height:15px;background:#f0f0f0;border:1px solid #d9d9d9;border-bottom:none;box-sizing:border-box;"></div>
<div class="t" style="left:2142.0px;top:171.5px;width:49px;text-align:center;font-size:12px;line-height:16px;font-family:'Liberation Sans', sans-serif;color:#333;z-index:3;">2</div>
<div style="left:2180.5px;top:168px;width:31px;height:19px;background:#fff;border:1px solid #d9d9d9;border-bottom:none;box-sizing:border-box;z-index:2;"></div>
<div class="t" style="left:2170.5px;top:170.0px;width:51px;text-align:center;font-size:12px;line-height:16px;font-family:'Liberation Sans', sans-serif;color:#333;z-index:3;">3</div>
<div style="left:2102.5px;top:191px;width:70px;height:17.5px;background:#e1e1e1;border:1px solid #adadad;box-sizing:border-box;"></div>
<div class="t" style="left:2092.5px;top:190.8px;width:90px;text-align:center;font-size:14px;line-height:18px;font-family:'Liberation Serif', serif;color:#333;">全不选</div>
<div style="left:2101.5px;top:211px;width:190px;height:122px;background:#fff;border:1px solid #adadad;box-sizing:border-box;"></div>
<div class="t" style="left:2103.5px;top:216.0px;width:60px;text-align:center;font-size:12px;line-height:16px;font-family:'Liberation Sans', sans-serif;color:#222;">复选</div>
<div class="t" style="left:2198.0px;top:216.0px;width:60px;text-align:center;font-size:12px;line-height:16px;font-family:'Liberation Sans', sans-serif;color:#222;">区域</div>
<div style="left:2164.5px;top:213px;width:1px;height:22px;background:#e8e8e8;"></div>
<div style="left:2124.5px;top:237.3px;width:12px;height:12px;border:1px solid #333;box-sizing:border-box;background:#fff;"></div>
<svg style="left:2124.5px;top:237.3px;" width="12" height="12"><path d="M2.5 6.5 L5.2 9.2 L10.5 3.5" stroke="#222" stroke-width="1.2" fill="none"/></svg>
<div class="t" style="left:2198.0px;top:235.3px;width:60px;text-align:center;font-size:12px;line-height:16px;font-family:'Liberation Sans', sans-serif;color:#111;">area0</div>
<div style="left:2124.5px;top:254.37px;width:12px;height:12px;border:1px solid #333;box-sizing:border-box;background:#fff;"></div>
<svg style="left:2124.5px;top:254.37px;" width="12" height="12"><path d="M2.5 6.5 L5.2 9.2 L10.5 3.5" stroke="#222" stroke-width="1.2" fill="none"/></svg>
<div class="t" style="left:2198.0px;top:252.4px;width:60px;text-align:center;font-size:12px;line-height:16px;font-family:'Liberation Sans', sans-serif;color:#111;">area1</div>
<div style="left:2124.5px;top:271.44px;width:12px;height:12px;border:1px solid #333;box-sizing:border-box;background:#fff;"></div>
<svg style="left:2124.5px;top:271.44px;" width="12" height="12"><path d="M2.5 6.5 L5.2 9.2 L10.5 3.5" stroke="#222" stroke-width="1.2" fill="none"/></svg>
<div class="t" style="left:2198.0px;top:269.4px;width:60px;text-align:center;font-size:12px;line-height:16px;font-family:'Liberation Sans', sans-serif;color:#111;">area2</div>
<div style="left:2124.5px;top:288.51px;width:12px;height:12px;border:1px solid #333;box-sizing:border-box;background:#fff;"></div>
<svg style="left:2124.5px;top:288.51px;" width="12" height="12"><path d="M2.5 6.5 L5.2 9.2 L10.5 3.5" stroke="#222" stroke-width="1.2" fill="none"/></svg>
<div class="t" style="left:2198.0px;top:286.5px;width:60px;text-align:center;font-size:12px;line-height:16px;font-family:'Liberation Sans', sans-serif;color:#111;">area3</div>
<div style="left:2100px;top:359px;width:195px;height:150px;background:#fff;border:1px solid #d9d9d9;box-sizing:border-box;"></div>
<div style="left:2100px;top:342px;width:45px;height:18px;background:#fff;border:1px solid #d9d9d9;border-bottom:none;box-sizing:border-box;z-index:2;"></div>
<div class="t" style="left:2090.0px;top:343.5px;width:65px;text-align:center;font-size:12px;line-height:16px;font-family:'Liberation Sans', sans-serif;color:#333;z-index:3;">参数</div>
<div class="t" style="left:2101.5px;top:365.0px;font-size:14px;line-height:18px;font-family:'Liberation Serif', serif;color:#333;">参数组</div>
<div style="left:2149.5px;top:366px;width:69px;height:17.5px;background:#e5e5e5;border:1px solid #adadad;box-sizing:border-box;"></div>
<svg style="left:2201.5px;top:368.75px;" width="12" height="12"><path transform="translate(6,6)" d="M-4 -2.0 L0 2.0 L4 -2.0" stroke="#444" stroke-width="1.1" fill="none"/></svg>
<div style="left:2101.5px;top:386.5px;width:190px;height:122px;background:#fff;border:1px solid #adadad;box-sizing:border-box;"></div>
<div style="left:2277.5px;top:387.5px;width:13px;height:120px;background:#f0f0f0;"></div>
<div style="left:2278.5px;top:420px;width:11px;height:31px;background:#cdcdcd;"></div>
<svg style="left:2278.0px;top:389.5px;" width="12" height="12"><path transform="translate(6,6)" d="M-4 2.0 L0 -2.0 L4 2.0" stroke="#555" stroke-width="1.1" fill="none"/></svg>
<svg style="left:2278.0px;top:493.5px;" width="12" height="12"><path transform="translate(6,6)" d="M-4 -2.0 L0 2.0 L4 -2.0" stroke="#555" stroke-width="1.1" fill="none"/></svg>
<div style="left:2164px;top:411.5px;width:12px;height:12px;border:1px solid #333;box-sizing:border-box;background:#fff;"></div>
<svg style="left:2164px;top:411.5px;" width="12" height="12"><path d="M2.5 6.5 L5.2 9.2 L10.5 3.5" stroke="#222" stroke-width="1.2" fill="none"/></svg>
<div class="t" style="left:2181.5px;top:409.5px;font-size:12px;line-height:16px;font-family:'Liberation Sans', sans-serif;color:#111;">CalibrationArea</div>
<div style="left:2164px;top:428.5px;width:12px;height:12px;border:1px solid #333;box-sizing:border-box;background:#fff;"></div>
<svg style="left:2164px;top:428.5px;" width="12" height="12"><path d="M2.5 6.5 L5.2 9.2 L10.5 3.5" stroke="#222" stroke-width="1.2" fill="none"/></svg>
<div class="t" style="left:2181.5px;top:426.5px;font-size:12px;line-height:16px;font-family:'Liberation Sans', sans-serif;color:#111;">Circularity</div>
<div style="left:2164px;top:445.5px;width:12px;height:12px;border:1px solid #333;box-sizing:border-box;background:#fff;"></div>
<svg style="left:2164px;top:445.5px;" width="12" height="12"><path d="M2.5 6.5 L5.2 9.2 L10.5 3.5" stroke="#222" stroke-width="1.2" fill="none"/></svg>
<div class="t" style="left:2181.5px;top:443.5px;font-size:12px;line-height:16px;font-family:'Liberation Sans', sans-serif;color:#111;">Aspectratio</div>
<div style="left:2164px;top:462.5px;width:12px;height:12px;border:1px solid #333;box-sizing:border-box;background:#fff;"></div>
<svg style="left:2164px;top:462.5px;" width="12" height="12"><path d="M2.5 6.5 L5.2 9.2 L10.5 3.5" stroke="#222" stroke-width="1.2" fill="none"/></svg>
<div class="t" style="left:2181.5px;top:460.5px;font-size:12px;line-height:16px;font-family:'Liberation Sans', sans-serif;color:#111;">Solidity</div>
<div style="left:2164px;top:479.5px;width:12px;height:12px;border:1px solid #333;box-sizing:border-box;background:#fff;"></div>
<svg style="left:2164px;top:479.5px;" width="12" height="12"><path d="M2.5 6.5 L5.2 9.2 L10.5 3.5" stroke="#222" stroke-width="1.2" fill="none"/></svg>
<div class="t" style="left:2181.5px;top:477.5px;font-size:12px;line-height:16px;font-family:'Liberation Sans', sans-serif;color:#111;">Roundness</div>
<div style="left:2164px;top:496.5px;width:12px;height:12px;border:1px solid #333;box-sizing:border-box;background:#fff;"></div>
<div class="t" style="left:2181.5px;top:494.5px;font-size:12px;line-height:16px;font-family:'Liberation Sans', sans-serif;color:#111;">F690/F740</div>
<div style="left:2101.5px;top:507px;width:195px;height:2px;background:#fff;"></div>
<div class="t" style="left:1707.5px;top:517.0px;font-size:15px;line-height:19px;font-family:'Liberation Serif', serif;color:#111;font-weight:bold;">波峰波长</div>
<div class="t" style="left:1709.0px;top:543.5px;width:60px;text-align:center;font-size:15px;line-height:19px;font-family:'Liberation Serif', serif;color:#111;font-weight:bold;">及值</div>
<div style="left:1703px;top:595.5px;width:71px;height:37px;background:#e1e1e1;border:1px solid #adadad;box-sizing:border-box;"></div>
<div class="t" style="left:1693.0px;top:597.5px;width:91px;text-align:center;font-size:14px;line-height:18px;font-family:'Liberation Serif', serif;color:#222;font-weight:bold;">导出波峰</div>
<div class="t" style="left:1693.0px;top:613.5px;width:91px;text-align:center;font-size:14px;line-height:18px;font-family:'Liberation Serif', serif;color:#222;font-weight:bold;">数据</div>
<div style="left:1703px;top:656px;width:71px;height:36px;background:#e1e1e1;border:1px solid #adadad;box-sizing:border-box;"></div>
<div class="t" style="left:1693.0px;top:657.7px;width:91px;text-align:center;font-size:14px;line-height:18px;font-family:'Liberation Serif', serif;color:#222;font-weight:bold;">手动选区</div>
<div class="t" style="left:1693.0px;top:673.3px;width:91px;text-align:center;font-size:14px;line-height:18px;font-family:'Liberation Serif', serif;color:#222;font-weight:bold;">分析</div>
<div style="left:1703px;top:700px;width:71px;height:36px;background:#e1e1e1;border:1px solid #adadad;box-sizing:border-box;"></div>
<div class="t" style="left:1693.0px;top:701.7px;width:91px;text-align:center;font-size:14px;line-height:18px;font-family:'Liberation Serif', serif;color:#222;font-weight:bold;">自动选区</div>
<div class="t" style="left:1693.0px;top:717.3px;width:91px;text-align:center;font-size:14px;line-height:18px;font-family:'Liberation Serif', serif;color:#222;font-weight:bold;">分析</div>
<div style="left:1703px;top:744.5px;width:71px;height:14px;overflow:hidden;">
<div style="left:0px;top:0px;width:71px;height:36px;background:#e1e1e1;border:1px solid #adadad;box-sizing:border-box;"></div>
<div class="t" style="left:-10.0px;top:1.7px;width:91px;text-align:center;font-size:14px;line-height:18px;font-family:'Liberation Serif', serif;color:#222;font-weight:bold;">导出分析</div>
</div>
<div style="left:1777px;top:513px;width:520px;height:135px;background:#fff;border:1px solid #adadad;box-sizing:border-box;"></div>
<div class="t" style="left:1744.0px;top:514.6px;width:160px;text-align:center;font-size:12.8px;line-height:16.8px;font-family:'Liberation Sans', sans-serif;color:#111;font-weight:bold;">区域</div>
<div class="t" style="left:1854.5px;top:514.6px;width:160px;text-align:center;font-size:12.8px;line-height:16.8px;font-family:'Liberation Sans', sans-serif;color:#111;font-weight:bold;">&lt;490nm 1</div>
<div class="t" style="left:1965.5px;top:514.6px;width:160px;text-align:center;font-size:12.8px;line-height:16.8px;font-family:'Liberation Sans', sans-serif;color:#111;font-weight:bold;">峰值1</div>
<div class="t" style="left:2076.5px;top:514.6px;width:160px;text-align:center;font-size:12.8px;line-height:16.8px;font-family:'Liberation Sans', sans-serif;color:#111;font-weight:bold;">&lt;490nm 2</div>
<div class="t" style="left:2252px;top:514.6px;font-size:12.8px;line-height:16.8px;font-family:'Liberation Sans', sans-serif;color:#111;font-weight:bold;white-space:nowrap;">峰值2</div>
<div style="left:1793px;top:515px;width:1px;height:116px;background:#e3e3e3;"></div>
<div style="left:1855px;top:515px;width:1px;height:116px;background:#e3e3e3;"></div>
<div style="left:2014px;top:515px;width:1px;height:116px;background:#e3e3e3;"></div>
<div style="left:2077px;top:515px;width:1px;height:116px;background:#e3e3e3;"></div>
<div style="left:2236px;top:515px;width:1px;height:116px;background:#e3e3e3;"></div>
<div class="t" style="left:1781px;top:538.3px;font-size:12.8px;line-height:16.8px;font-family:'Liberation Sans', sans-serif;color:#222;">1</div>
<div class="t" style="left:1861px;top:538.3px;font-size:12.8px;line-height:16.8px;font-family:'Liberation Sans', sans-serif;color:#222;">0</div>
<div class="t" style="left:2020px;top:538.3px;font-size:12.8px;line-height:16.8px;font-family:'Liberation Sans', sans-serif;color:#222;">0</div>
<div class="t" style="left:2083px;top:538.3px;font-size:12.8px;line-height:16.8px;font-family:'Liberation Sans', sans-serif;color:#222;">0</div>
<div class="t" style="left:2242px;top:538.3px;font-size:12.8px;line-height:16.8px;font-family:'Liberation Sans', sans-serif;color:#222;">0</div>
<div style="left:1793px;top:560.2px;width:487px;height:1px;background:#e3e3e3;"></div>
<div class="t" style="left:1781px;top:566.9px;font-size:12.8px;line-height:16.8px;font-family:'Liberation Sans', sans-serif;color:#222;">2</div>
<div class="t" style="left:1861px;top:566.9px;font-size:12.8px;line-height:16.8px;font-family:'Liberation Sans', sans-serif;color:#222;">0</div>
<div class="t" style="left:2020px;top:566.9px;font-size:12.8px;line-height:16.8px;font-family:'Liberation Sans', sans-serif;color:#222;">0</div>
<div class="t" style="left:2083px;top:566.9px;font-size:12.8px;line-height:16.8px;font-family:'Liberation Sans', sans-serif;color:#222;">0</div>
<div class="t" style="left:2242px;top:566.9px;font-size:12.8px;line-height:16.8px;font-family:'Liberation Sans', sans-serif;color:#222;">0</div>
<div style="left:1793px;top:588.8000000000001px;width:487px;height:1px;background:#e3e3e3;"></div>
<div class="t" style="left:1781px;top:595.5px;font-size:12.8px;line-height:16.8px;font-family:'Liberation Sans', sans-serif;color:#222;">3</div>
<div class="t" style="left:1861px;top:595.5px;font-size:12.8px;line-height:16.8px;font-family:'Liberation Sans', sans-serif;color:#222;">0</div>
<div class="t" style="left:2020px;top:595.5px;font-size:12.8px;line-height:16.8px;font-family:'Liberation Sans', sans-serif;color:#222;">0</div>
<div class="t" style="left:2083px;top:595.5px;font-size:12.8px;line-height:16.8px;font-family:'Liberation Sans', sans-serif;color:#222;">0</div>
<div class="t" style="left:2242px;top:595.5px;font-size:12.8px;line-height:16.8px;font-family:'Liberation Sans', sans-serif;color:#222;">0</div>
<div style="left:1793px;top:617.4000000000001px;width:487px;height:1px;background:#e3e3e3;"></div>
<div class="t" style="left:1781px;top:624.1px;font-size:12.8px;line-height:16.8px;font-family:'Liberation Sans', sans-serif;color:#222;">4</div>
<div class="t" style="left:1861px;top:624.1px;font-size:12.8px;line-height:16.8px;font-family:'Liberation Sans', sans-serif;color:#222;">0</div>
<div class="t" style="left:2020px;top:624.1px;font-size:12.8px;line-height:16.8px;font-family:'Liberation Sans', sans-serif;color:#222;">0</div>
<div class="t" style="left:2083px;top:624.1px;font-size:12.8px;line-height:16.8px;font-family:'Liberation Sans', sans-serif;color:#222;">0</div>
<div class="t" style="left:2242px;top:624.1px;font-size:12.8px;line-height:16.8px;font-family:'Liberation Sans', sans-serif;color:#222;">0</div>
<div style="left:1793px;top:646.0px;width:487px;height:1px;background:#e3e3e3;"></div>
<div style="left:1778px;top:617.5px;width:502px;height:14px;background:#fff;"></div>
<div style="left:1861px;top:628px;width:7px;height:3px;border:1.2px solid #444;border-bottom:none;border-radius:4px 4px 0 0;box-sizing:border-box;"></div>
<div style="left:2020px;top:628px;width:7px;height:3px;border:1.2px solid #444;border-bottom:none;border-radius:4px 4px 0 0;box-sizing:border-box;"></div>
<div style="left:2083px;top:628px;width:7px;height:3px;border:1.2px solid #444;border-bottom:none;border-radius:4px 4px 0 0;box-sizing:border-box;"></div>
<div style="left:2242px;top:628px;width:7px;height:3px;border:1.2px solid #444;border-bottom:none;border-radius:4px 4px 0 0;box-sizing:border-box;"></div>
<div style="left:1780px;top:629px;width:3px;height:2px;background:#555;"></div>
<div style="left:2280px;top:514px;width:16px;height:117px;background:#f0f0f0;"></div>
<div style="left:2281px;top:529px;width:14px;height:64px;background:#cdcdcd;"></div>
<svg style="left:2282.0px;top:516px;" width="12" height="12"><path transform="translate(6,6)" d="M-4 2.0 L0 -2.0 L4 2.0" stroke="#555" stroke-width="1.1" fill="none"/></svg>
<svg style="left:2282.0px;top:617px;" width="12" height="12"><path transform="translate(6,6)" d="M-4 -2.0 L0 2.0 L4 -2.0" stroke="#555" stroke-width="1.1" fill="none"/></svg>
<div style="left:1778px;top:631px;width:502px;height:16px;background:#f0f0f0;"></div>
<div style="left:1795px;top:632px;width:110px;height:14px;background:#cdcdcd;"></div>
<svg style="left:1780px;top:633.0px;" width="12" height="12"><path transform="translate(6,6)" d="M2.0 -4 L-2.0 0 L2.0 4" stroke="#555" stroke-width="1.1" fill="none"/></svg>
<svg style="left:2266px;top:633.0px;" width="12" height="12"><path transform="translate(6,6)" d="M-2.0 -4 L2.0 0 L-2.0 4" stroke="#555" stroke-width="1.1" fill="none"/></svg>
<div style="left:2280px;top:631px;width:16px;height:16px;background:#f0f0f0;"></div>
<div style="left:1777px;top:655px;width:520px;height:114px;background:#fff;border:1px solid #adadad;box-sizing:border-box;"></div>
<div class="t" style="left:1772.0px;top:658.6px;width:140px;text-align:center;font-size:12.8px;line-height:16.8px;font-family:'Liberation Sans', sans-serif;color:#111;">PixelsNumber</div>
<div class="t" style="left:1870.5px;top:658.6px;width:140px;text-align:center;font-size:12.8px;line-height:16.8px;font-family:'Liberation Sans', sans-serif;color:#111;">CalibrationArea</div>
<div class="t" style="left:1969.5px;top:658.6px;width:140px;text-align:center;font-size:12.8px;line-height:16.8px;font-family:'Liberation Sans', sans-serif;color:#111;">Circularity</div>
<div class="t" style="left:2068.8px;top:658.6px;width:140px;text-align:center;font-size:12.8px;line-height:16.8px;font-family:'Liberation Sans', sans-serif;color:#111;">Aspectratio</div>
<div class="t" style="left:2164.2px;top:658.6px;width:140px;text-align:center;font-size:12.8px;line-height:16.8px;font-family:'Liberation Sans', sans-serif;color:#111;">Solidity</div>
<div style="left:1793px;top:657px;width:1px;height:101px;background:#e3e3e3;"></div>
<div style="left:1891px;top:657px;width:1px;height:101px;background:#e3e3e3;"></div>
<div style="left:1990px;top:657px;width:1px;height:101px;background:#e3e3e3;"></div>
<div style="left:2089px;top:657px;width:1px;height:101px;background:#e3e3e3;"></div>
<div style="left:2188.5px;top:657px;width:1px;height:101px;background:#e3e3e3;"></div>
<div class="t" style="left:1781px;top:683.8px;font-size:12.8px;line-height:16.8px;font-family:'Liberation Sans', sans-serif;color:#222;">2</div>
<div class="t" style="left:1797px;top:683.8px;font-size:12.8px;line-height:16.8px;font-family:'Liberation Sans', sans-serif;color:#222;">56014</div>
<div class="t" style="left:1895px;top:683.8px;font-size:12.8px;line-height:16.8px;font-family:'Liberation Sans', sans-serif;color:#222;">22.406</div>
<div class="t" style="left:1994px;top:683.8px;font-size:12.8px;line-height:16.8px;font-family:'Liberation Sans', sans-serif;color:#222;">0.9211</div>
<div class="t" style="left:2093px;top:683.8px;font-size:12.8px;line-height:16.8px;font-family:'Liberation Sans', sans-serif;color:#222;">0.9211</div>
<div class="t" style="left:2192.5px;top:683.8px;font-size:12.8px;line-height:16.8px;font-family:'Liberation Sans', sans-serif;color:#222;">0.9211</div>
<div style="left:1793px;top:706.2px;width:487px;height:1px;background:#e3e3e3;"></div>
<div class="t" style="left:1781px;top:712.4px;font-size:12.8px;line-height:16.8px;font-family:'Liberation Sans', sans-serif;color:#222;">3</div>
<div class="t" style="left:1797px;top:712.4px;font-size:12.8px;line-height:16.8px;font-family:'Liberation Sans', sans-serif;color:#222;">112973</div>
<div class="t" style="left:1895px;top:712.4px;font-size:12.8px;line-height:16.8px;font-family:'Liberation Sans', sans-serif;color:#222;">45.189</div>
<div class="t" style="left:1994px;top:712.4px;font-size:12.8px;line-height:16.8px;font-family:'Liberation Sans', sans-serif;color:#222;">0.9342</div>
<div class="t" style="left:2093px;top:712.4px;font-size:12.8px;line-height:16.8px;font-family:'Liberation Sans', sans-serif;color:#222;">0.9342</div>
<div class="t" style="left:2192.5px;top:712.4px;font-size:12.8px;line-height:16.8px;font-family:'Liberation Sans', sans-serif;color:#222;">0.9342</div>
<div style="left:1793px;top:734.8000000000001px;width:487px;height:1px;background:#e3e3e3;"></div>
<div class="t" style="left:1781px;top:741.0px;font-size:12.8px;line-height:16.8px;font-family:'Liberation Sans', sans-serif;color:#222;">4</div>
<div class="t" style="left:1797px;top:741.0px;font-size:12.8px;line-height:16.8px;font-family:'Liberation Sans', sans-serif;color:#222;">35908</div>
<div class="t" style="left:1895px;top:741.0px;font-size:12.8px;line-height:16.8px;font-family:'Liberation Sans', sans-serif;color:#222;">14.363</div>
<div class="t" style="left:1994px;top:741.0px;font-size:12.8px;line-height:16.8px;font-family:'Liberation Sans', sans-serif;color:#222;">0.9188</div>
<div class="t" style="left:2093px;top:741.0px;font-size:12.8px;line-height:16.8px;font-family:'Liberation Sans', sans-serif;color:#222;">0.9188</div>
<div class="t" style="left:2192.5px;top:741.0px;font-size:12.8px;line-height:16.8px;font-family:'Liberation Sans', sans-serif;color:#222;">0.9188</div>
<div style="left:2280px;top:656px;width:16px;height:103px;background:#f0f0f0;"></div>
<div style="left:2281px;top:691px;width:14px;height:57px;background:#cdcdcd;"></div>
<svg style="left:2282.0px;top:658px;" width="12" height="12"><path transform="translate(6,6)" d="M-4 2.0 L0 -2.0 L4 2.0" stroke="#555" stroke-width="1.1" fill="none"/></svg>
<svg style="left:2282.0px;top:745px;" width="12" height="12"><path transform="translate(6,6)" d="M-4 -2.0 L0 2.0 L4 -2.0" stroke="#555" stroke-width="1.1" fill="none"/></svg>
<div style="left:1190px;top:759px;width:1117px;height:19px;background:#f0f0f0;"></div>
</body></html>
